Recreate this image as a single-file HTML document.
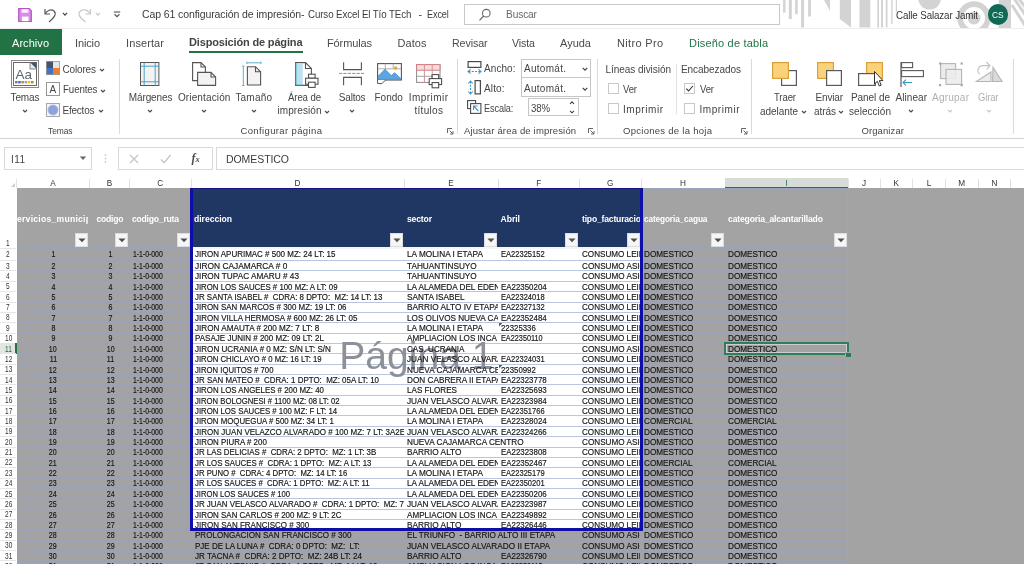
<!DOCTYPE html>
<html lang="es"><head><meta charset="utf-8"><title>Excel</title><style>
html,body{margin:0;padding:0;background:#fff;}
body{width:1024px;height:564px;overflow:hidden;position:relative;font-family:"Liberation Sans",sans-serif;}
#root{position:absolute;left:0;top:0;width:1024px;height:564px;overflow:hidden;will-change:transform;}
#root div,#root span.t,#root svg{position:absolute;}
.t{white-space:pre;}
.gl{height:3.4px;margin-top:-0.2px;background:linear-gradient(to bottom,rgba(152,160,196,0),rgba(152,160,196,.7) 45%,rgba(152,160,196,.7) 55%,rgba(152,160,196,0));}
.c{overflow:hidden;white-space:pre;font-size:8.6px;line-height:10px;color:#161616;}
.c span{display:inline-block;-webkit-text-stroke:0.17px #161616;}
svg{overflow:visible;}
</style></head><body><div id="root">
<div style="left:0px;top:0px;width:1024px;height:29px;background:#fff;"></div>
<svg style="left:0;top:0;overflow:hidden" width="1024" height="28" viewBox="0 0 1024 28">
<g fill="#d3d3d3">
<rect x="783.1" y="0" width="2.4" height="12.7"/><rect x="788.8" y="0" width="3" height="19"/><rect x="795.1" y="0" width="2.6" height="14.2"/>
<rect x="801.1" y="0" width="2.9" height="27.5"/><rect x="808.1" y="0" width="2.8" height="16.5"/>
<polygon points="824,0 830,0 830,11"/>
<polygon points="839.8,0 851,0 851,27.5 839.8,19"/>
<rect x="859.5" y="0" width="10.8" height="27.5"/>
<rect x="877.3" y="0" width="1.7" height="27.5"/><rect x="881" y="0" width="2" height="27.5"/><rect x="885.8" y="0" width="1.7" height="27.3"/><rect x="891.2" y="0" width="1.4" height="24"/><rect x="895.8" y="0" width="1.2" height="12"/>
<circle cx="929.6" cy="-2" r="11.5"/>
<rect x="998.7" y="0" width="12.3" height="28"/>
<circle cx="974" cy="18" r="6.5"/>
</g>
<circle cx="974" cy="18" r="13.85" fill="none" stroke="#d3d3d3" stroke-width="5.7"/>
<g stroke="#d3d3d3" stroke-width="3" fill="none"><path d="M1012 5 L1026 27 M1014.5 -1 L1026 16 M1019 -1 L1026 8"/></g>
</svg>
<svg style="left:18px;top:8.2px" width="14" height="14.2" viewBox="0 0 14 14.2"><path d="M0.7 0.7 H11.3 L13.3 2.7 V13.5 H0.7 Z" fill="#d98de6" stroke="#b653c8" stroke-width="1.2"/>
<rect x="3.6" y="1.2" width="6.8" height="3.6" fill="#fbf1fc"/>
<rect x="3.9" y="8.6" width="6.6" height="4.6" fill="#fff"/></svg>
<svg style="left:42px;top:6px" width="18" height="18" viewBox="0 0 18 18"><path d="M3 3 V8 H8" fill="none" stroke="#555" stroke-width="1.2"/><path d="M3.2 7.8 C5 4.5 9 2.5 12 5 C15 8 12 12 7 16" fill="none" stroke="#555" stroke-width="1.2"/></svg>
<svg style="left:60.5px;top:11px" width="8" height="6" viewBox="0 0 8 6"><path d="M1.9 1.95 L4 4.05 L6.1 1.95" fill="none" stroke="#444" stroke-width="1.2"/></svg>
<svg style="left:75px;top:6px" width="18" height="18" viewBox="0 0 18 18"><path d="M15.5 3 V8 H10.5" fill="none" stroke="#c6c6c6" stroke-width="1.2"/><path d="M15.3 7.8 C13.5 4.5 9 2.3 5.5 5 C2 8 5 12 10.5 16" fill="none" stroke="#c6c6c6" stroke-width="1.2"/></svg>
<svg style="left:94px;top:11px" width="8" height="6" viewBox="0 0 8 6"><path d="M1.9 1.95 L4 4.05 L6.1 1.95" fill="none" stroke="#cacaca" stroke-width="1.2"/></svg>
<svg style="left:112px;top:9px" width="10" height="10" viewBox="0 0 10 10"><path d="M1.8 3 H8.2" stroke="#555" stroke-width="1.1"/><path d="M2.6 5.3 L5 7.6 L7.4 5.3" fill="none" stroke="#555" stroke-width="1.2"/></svg>
<span class="t" style="left:142.00px;top:7.02px;font-size:10.5px;line-height:14px;color:#3b3b3b;letter-spacing:-0.102px;">Cap 61 configuración de impresión-</span>
<span class="t" style="left:308.40px;top:7.02px;font-size:10.5px;line-height:14px;color:#3b3b3b;letter-spacing:-0.120px;transform:scaleX(0.928);transform-origin:0 50%;">Curso Excel El Tío TEch</span>
<span class="t" style="left:418.60px;top:7.02px;font-size:10.5px;line-height:14px;color:#3b3b3b;">-</span>
<span class="t" style="left:426.70px;top:7.02px;font-size:10.5px;line-height:14px;color:#3b3b3b;letter-spacing:-0.120px;transform:scaleX(0.865);transform-origin:0 50%;">Excel</span>
<div style="left:463.5px;top:4px;width:316.5px;height:21px;background:#fff;border:1px solid #c8c8c8;box-sizing:border-box;"></div>
<svg style="left:478px;top:8px" width="14" height="14" viewBox="0 0 14 14"><circle cx="8.3" cy="5.2" r="3.8" fill="none" stroke="#666" stroke-width="1.1"/><path d="M5.6 8 L1.5 12.3" stroke="#666" stroke-width="1.2"/></svg>
<span class="t" style="left:506.00px;top:7.32px;font-size:10.5px;line-height:14px;color:#666;letter-spacing:-0.120px;transform:scaleX(0.966);transform-origin:0 50%;">Buscar</span>
<span class="t" style="left:896.00px;top:7.62px;font-size:10.5px;line-height:14px;color:#333;letter-spacing:-0.120px;transform:scaleX(0.929);transform-origin:0 50%;">Calle Salazar Jamit</span>
<div style="left:987.7px;top:4.3px;width:20.4px;height:20.4px;border-radius:11px;background:#0f6955"></div>
<span class="t" style="left:992.35px;top:8.71px;font-size:9.2px;line-height:12px;color:#fff;letter-spacing:-0.120px;transform:scaleX(0.908);transform-origin:0 50%;">CS</span>
<div style="left:0px;top:28px;width:1024px;height:28px;background:#fff;"></div>
<div style="left:0px;top:28px;width:1024px;height:1px;background:#efefef;"></div>
<div style="left:0px;top:29px;width:62px;height:26px;background:#217346;"></div>
<span class="t" style="left:12.00px;top:35.63px;font-size:11px;line-height:14px;color:#fff;letter-spacing:0.053px;">Archivo</span>
<span class="t" style="left:75.00px;top:35.63px;font-size:11px;line-height:14px;color:#4a4a4a;letter-spacing:-0.136px;">Inicio</span>
<span class="t" style="left:126.00px;top:35.63px;font-size:11px;line-height:14px;color:#4a4a4a;letter-spacing:0.101px;">Insertar</span>
<span class="t" style="left:327.00px;top:35.63px;font-size:11px;line-height:14px;color:#4a4a4a;letter-spacing:-0.121px;">Fórmulas</span>
<span class="t" style="left:397.50px;top:35.63px;font-size:11px;line-height:14px;color:#4a4a4a;letter-spacing:0.066px;">Datos</span>
<span class="t" style="left:451.50px;top:35.63px;font-size:11px;line-height:14px;color:#4a4a4a;letter-spacing:-0.120px;transform:scaleX(0.971);transform-origin:0 50%;">Revisar</span>
<span class="t" style="left:511.50px;top:35.63px;font-size:11px;line-height:14px;color:#4a4a4a;letter-spacing:-0.120px;transform:scaleX(0.967);transform-origin:0 50%;">Vista</span>
<span class="t" style="left:560.00px;top:35.63px;font-size:11px;line-height:14px;color:#4a4a4a;">Ayuda</span>
<span class="t" style="left:617.00px;top:35.63px;font-size:11px;line-height:14px;color:#4a4a4a;letter-spacing:0.325px;">Nitro Pro</span>
<span class="t" style="left:189.00px;top:35.43px;font-size:11px;line-height:14px;color:#444;font-weight:bold;letter-spacing:-0.162px;">Disposición de página</span>
<div style="left:189px;top:51.1px;width:114px;height:2.3px;background:#217346;"></div>
<span class="t" style="left:689.00px;top:35.63px;font-size:11px;line-height:14px;color:#217346;letter-spacing:0.183px;">Diseño de tabla</span>
<div style="left:0px;top:56px;width:1024px;height:83px;background:#fff;"></div>
<div style="left:0px;top:138.4px;width:1024px;height:1px;background:#d2d2d2;"></div>
<svg style="left:11px;top:60px" width="28" height="28" viewBox="0 0 28 28"><rect x="0.5" y="0.5" width="27" height="27" fill="#fff" stroke="#8a8a8a"/><rect x="2.5" y="2.5" width="23" height="23" fill="#fff" stroke="#6a6a6a"/>
<path d="M19 2.5 L25.5 9 V2.5 Z" fill="#44546a"/><path d="M19 2.5 V9 H25.5" fill="#e8e8e8" stroke="#6a6a6a" stroke-width="0.8"/>
<text x="4.5" y="18.5" font-family="Liberation Sans, sans-serif" font-size="13.5" fill="#5d6470">Aa</text>
<g><rect x="4" y="21" width="2.6" height="2.4" fill="#7f7f7f"/><rect x="7.2" y="21" width="2.6" height="2.4" fill="#4472c4"/><rect x="10.4" y="21" width="2.6" height="2.4" fill="#ed7d31"/><rect x="13.6" y="21" width="2.6" height="2.4" fill="#a5a5a5"/><rect x="16.8" y="21" width="2.6" height="2.4" fill="#ffc000"/><rect x="20" y="21" width="2.6" height="2.4" fill="#70ad47"/></g></svg>
<span class="t" style="left:10.50px;top:90.61px;font-size:10px;line-height:13px;color:#454545;letter-spacing:-0.113px;">Temas</span>
<svg style="left:20.5px;top:107.5px" width="8" height="6" viewBox="0 0 8 6"><path d="M2.0 2.0 L4 4.0 L6.0 2.0" fill="none" stroke="#4a4a4a" stroke-width="1.15"/></svg>
<svg style="left:45.6px;top:61.2px" width="14" height="14" viewBox="0 0 14 14"><rect x="0" y="0" width="7" height="7" fill="#44546a"/><rect x="7" y="0" width="7" height="7" fill="#e7e6e6"/><rect x="0" y="7" width="7" height="7" fill="#4472c4"/><rect x="7" y="7" width="7" height="7" fill="#ed7d31"/><rect x="0.5" y="0.5" width="13" height="13" fill="none" stroke="#9a9a9a" stroke-width="0.8"/></svg>
<span class="t" style="left:62.50px;top:62.52px;font-size:10px;line-height:13px;color:#454545;letter-spacing:-0.160px;">Colores</span>
<svg style="left:98px;top:66.5px" width="8" height="6" viewBox="0 0 8 6"><path d="M2.0 2.0 L4 4.0 L6.0 2.0" fill="none" stroke="#4a4a4a" stroke-width="1.15"/></svg>
<svg style="left:45.7px;top:82.2px" width="14" height="14" viewBox="0 0 14 14"><rect x="0.5" y="0.5" width="13" height="13" fill="#fff" stroke="#969696"/><text x="3.4" y="11" font-family="Liberation Sans, sans-serif" font-size="10" fill="#444">A</text></svg>
<span class="t" style="left:62.50px;top:83.11px;font-size:10px;line-height:13px;color:#454545;letter-spacing:-0.120px;transform:scaleX(0.974);transform-origin:0 50%;">Fuentes</span>
<svg style="left:99px;top:87.5px" width="8" height="6" viewBox="0 0 8 6"><path d="M2.0 2.0 L4 4.0 L6.0 2.0" fill="none" stroke="#4a4a4a" stroke-width="1.15"/></svg>
<svg style="left:45.7px;top:102.5px" width="14" height="14" viewBox="0 0 14 14"><rect x="0.5" y="0.5" width="13" height="13" fill="#f4f4f4" stroke="#a8a8a8"/><circle cx="7" cy="7" r="5" fill="#8da1dc" stroke="#a9b8e6" stroke-width="0.9"/></svg>
<span class="t" style="left:62.50px;top:103.61px;font-size:10px;line-height:13px;color:#454545;letter-spacing:-0.225px;">Efectos</span>
<svg style="left:96.5px;top:108px" width="8" height="6" viewBox="0 0 8 6"><path d="M2.0 2.0 L4 4.0 L6.0 2.0" fill="none" stroke="#4a4a4a" stroke-width="1.15"/></svg>
<span class="t" style="left:47.75px;top:125.11px;font-size:9.5px;line-height:12px;color:#454545;letter-spacing:-0.120px;transform:scaleX(0.891);transform-origin:0 50%;">Temas</span>
<div style="left:119px;top:59px;width:1px;height:75px;background:#dadada;"></div>
<svg style="left:140.3px;top:62px" width="19.4" height="24" viewBox="0 0 19.4 24"><rect x="0.5" y="0.5" width="18.4" height="23" fill="#f3f3f3" stroke="#555" stroke-width="1"/>
<path d="M4.2 0.5 V23.5 M15.2 0.5 V23.5 M0.5 4.2 H18.9 M0.5 19.8 H18.9" stroke="#3c9cc4" stroke-width="0.9"/></svg>
<span class="t" style="left:128.72px;top:90.61px;font-size:10px;line-height:13px;color:#454545;letter-spacing:-0.103px;">Márgenes</span>
<svg style="left:146px;top:107.5px" width="8" height="6" viewBox="0 0 8 6"><path d="M2.0 2.0 L4 4.0 L6.0 2.0" fill="none" stroke="#4a4a4a" stroke-width="1.15"/></svg>
<svg style="left:192px;top:62px" width="25" height="24" viewBox="0 0 25 24"><path d="M0.6 0.6 H9 L13.4 5 V18.6 H0.6 Z" fill="#fff" stroke="#555" stroke-width="1.1"/><path d="M9 0.6 V5 H13.4" fill="none" stroke="#555" stroke-width="1.1"/>
<path d="M5.6 10.4 H19 L23.6 15 V23.4 H5.6 Z" fill="#f3f3f3" stroke="#555" stroke-width="1.1"/><path d="M19 10.4 V15 H23.6" fill="none" stroke="#555" stroke-width="1.1"/></svg>
<span class="t" style="left:177.95px;top:90.61px;font-size:10px;line-height:13px;color:#454545;letter-spacing:0.136px;">Orientación</span>
<svg style="left:200px;top:107.5px" width="8" height="6" viewBox="0 0 8 6"><path d="M2.0 2.0 L4 4.0 L6.0 2.0" fill="none" stroke="#4a4a4a" stroke-width="1.15"/></svg>
<svg style="left:241px;top:61px" width="22" height="26" viewBox="0 0 22 26"><path d="M5.9 1.8 H20 M5.9 0.6 V3 M20 0.6 V3" stroke="#4ba6cc" stroke-width="0.9"/><path d="M2.3 5.2 V24.5 M1.1 5.2 H3.5 M1.1 24.5 H3.5" stroke="#4ba6cc" stroke-width="0.9"/>
<path d="M6.4 5.7 H14.5 L19.6 10.8 V24 H6.4 Z" fill="#f3f3f3" stroke="#555" stroke-width="1.1"/><path d="M14.5 5.7 V10.8 H19.6" fill="none" stroke="#555" stroke-width="1.1"/></svg>
<span class="t" style="left:235.45px;top:90.61px;font-size:10px;line-height:13px;color:#454545;letter-spacing:0.185px;">Tamaño</span>
<svg style="left:249.7px;top:107.5px" width="8" height="6" viewBox="0 0 8 6"><path d="M2.0 2.0 L4 4.0 L6.0 2.0" fill="none" stroke="#4a4a4a" stroke-width="1.15"/></svg>
<svg style="left:294.5px;top:62px" width="24" height="26" viewBox="0 0 24 26"><path d="M0.6 0.6 H10.5 L16.4 6.5 V23.4 H0.6 Z" fill="#fff" stroke="#555" stroke-width="1.1"/><path d="M10.5 0.6 V6.5 H16.4" fill="none" stroke="#555" stroke-width="1.1"/>
<rect x="1.1" y="1.1" width="6.6" height="21.8" fill="#bfdfee"/><path d="M1 1 V23 H8" fill="none" stroke="#4ba6cc" stroke-width="0.9"/><rect x="13.5" y="12.2" width="6.6" height="4" fill="#fff" stroke="#4a4a4a" stroke-width="1.05"/><rect x="10.6" y="16.2" width="12.4" height="6" fill="#fff" stroke="#4a4a4a" stroke-width="1.05"/><rect x="13.5" y="20.2" width="6.6" height="5.2" fill="#fff" stroke="#4a4a4a" stroke-width="1.05"/></svg>
<span class="t" style="left:288.00px;top:90.61px;font-size:10px;line-height:13px;color:#454545;letter-spacing:-0.120px;transform:scaleX(0.962);transform-origin:0 50%;">Área de</span>
<span class="t" style="left:277.50px;top:104.11px;font-size:10px;line-height:13px;color:#454545;letter-spacing:0.081px;">impresión</span>
<svg style="left:323px;top:108.5px" width="8" height="6" viewBox="0 0 8 6"><path d="M2.0 2.0 L4 4.0 L6.0 2.0" fill="none" stroke="#4a4a4a" stroke-width="1.15"/></svg>
<svg style="left:339px;top:62px" width="26" height="24" viewBox="0 0 26 24"><path d="M4.6 0.3 V7.6 H22.4 V0.3" fill="none" stroke="#555" stroke-width="1.1"/><path d="M4.6 23.2 V15.4 H22.4 V23.2" fill="none" stroke="#555" stroke-width="1.1"/>
<path d="M0 11.4 H26" stroke="#4ba6cc" stroke-width="1" stroke-dasharray="3.2 1.2"/></svg>
<span class="t" style="left:338.80px;top:90.61px;font-size:10px;line-height:13px;color:#454545;letter-spacing:-0.199px;">Saltos</span>
<svg style="left:347.8px;top:107.5px" width="8" height="6" viewBox="0 0 8 6"><path d="M2.0 2.0 L4 4.0 L6.0 2.0" fill="none" stroke="#4a4a4a" stroke-width="1.15"/></svg>
<svg style="left:376.5px;top:63px" width="25" height="22" viewBox="0 0 25 22"><rect x="0.6" y="0.6" width="23.8" height="16.4" fill="#fff" stroke="#555" stroke-width="1.1"/>
<path d="M8.3 0.6 V7 M16.2 0.6 V5.5 M0.6 5.8 H24.4" stroke="#9a9a9a" stroke-width="0.8"/>
<circle cx="18.7" cy="5" r="1.7" fill="#eea23a"/>
<path d="M1.2 16.4 V13 L8 6.2 L14.4 12.6 L17.6 9.6 L23.8 15.6 V16.4 Z" fill="#5ba6e2" stroke="#3e86c6" stroke-width="0.6"/>
<path d="M0.6 17 V20.6 H5 L8.6 17" fill="#fff" stroke="#555" stroke-width="1"/></svg>
<span class="t" style="left:374.45px;top:90.61px;font-size:10px;line-height:13px;color:#454545;letter-spacing:0.036px;">Fondo</span>
<svg style="left:416px;top:63.6px" width="27" height="25" viewBox="0 0 27 25"><rect x="0.6" y="0.6" width="23.4" height="17.8" fill="#fff" stroke="#8a8a8a" stroke-width="1"/>
<rect x="0.6" y="0.6" width="23.4" height="5.6" fill="#f6dede" stroke="#d47e7e" stroke-width="1"/>
<path d="M8.4 0.6 V18.4 M16.2 0.6 V18.4" stroke="#d89090" stroke-width="1"/><path d="M0.6 12.3 H24" stroke="#9a9a9a" stroke-width="0.9"/><rect x="16.099999999999998" y="10.6" width="6.6" height="4" fill="#fff" stroke="#4a4a4a" stroke-width="1.05"/><rect x="13.2" y="14.6" width="12.4" height="6" fill="#fff" stroke="#4a4a4a" stroke-width="1.05"/><rect x="16.099999999999998" y="18.6" width="6.6" height="5.2" fill="#fff" stroke="#4a4a4a" stroke-width="1.05"/></svg>
<span class="t" style="left:408.80px;top:90.61px;font-size:10px;line-height:13px;color:#454545;letter-spacing:0.442px;">Imprimir</span>
<span class="t" style="left:414.45px;top:104.11px;font-size:10px;line-height:13px;color:#454545;letter-spacing:0.303px;">títulos</span>
<span class="t" style="left:240.45px;top:125.11px;font-size:9.5px;line-height:12px;color:#454545;letter-spacing:0.373px;">Configurar página</span>
<svg style="left:447px;top:128px" width="7" height="7" viewBox="0 0 7 7"><path d="M0.5 5 V0.5 H5" fill="none" stroke="#666" stroke-width="1"/><path d="M2.5 2.5 L6 6 M6 3 V6 H3" fill="none" stroke="#666" stroke-width="1"/></svg>
<div style="left:457px;top:59px;width:1px;height:75px;background:#dadada;"></div>
<svg style="left:467px;top:60.5px" width="15" height="14" viewBox="0 0 15 14"><rect x="1.1" y="0.6" width="12.8" height="5.8" fill="#fff" stroke="#4a4a4a" stroke-width="1.2"/><path d="M1.5 10.5 H13.5" stroke="#3a96c8" stroke-width="1.1" stroke-dasharray="2 1.3"/><path d="M3.5 8.3 L1 10.5 L3.5 12.7 M11.5 8.3 L14 10.5 L11.5 12.7" fill="none" stroke="#3a96c8" stroke-width="1.1"/></svg>
<span class="t" style="left:484.00px;top:62.12px;font-size:10px;line-height:13px;color:#454545;letter-spacing:0.073px;">Ancho:</span>
<div style="left:521px;top:59px;width:70px;height:19px;background:#fff;border:1px solid #c6c6c6;box-sizing:border-box;"></div>
<span class="t" style="left:524.00px;top:62.12px;font-size:10px;line-height:13px;color:#454545;letter-spacing:0.283px;">Automát.</span>
<svg style="left:581px;top:66px" width="8" height="6" viewBox="0 0 8 6"><path d="M1.7000000000000002 1.85 L4 4.15 L6.3 1.85" fill="none" stroke="#444" stroke-width="1.2"/></svg>
<svg style="left:467px;top:80px" width="15" height="15" viewBox="0 0 15 15"><rect x="8.1" y="0.6" width="5.3" height="13.3" fill="#fff" stroke="#4a4a4a" stroke-width="1.2"/><path d="M3.5 1.5 V13.5" stroke="#3a96c8" stroke-width="1.1" stroke-dasharray="2 1.3"/><path d="M1.3 3.5 L3.5 1 L5.7 3.5 M1.3 11.5 L3.5 14 L5.7 11.5" fill="none" stroke="#3a96c8" stroke-width="1.1"/></svg>
<span class="t" style="left:484.00px;top:82.11px;font-size:10px;line-height:13px;color:#454545;letter-spacing:0.122px;">Alto:</span>
<div style="left:521px;top:77px;width:70px;height:20px;background:#fff;border:1px solid #c6c6c6;box-sizing:border-box;"></div>
<span class="t" style="left:524.00px;top:81.61px;font-size:10px;line-height:13px;color:#454545;letter-spacing:0.283px;">Automát.</span>
<svg style="left:581px;top:85.5px" width="8" height="6" viewBox="0 0 8 6"><path d="M1.7000000000000002 1.85 L4 4.15 L6.3 1.85" fill="none" stroke="#444" stroke-width="1.2"/></svg>
<svg style="left:467px;top:100px" width="15" height="14" viewBox="0 0 15 14"><rect x="0.6" y="0.6" width="8" height="8" fill="#fff" stroke="#4a4a4a" stroke-width="1.1"/><rect x="3.6" y="3.6" width="10.3" height="9.8" fill="#fff" stroke="#4a4a4a" stroke-width="1.1"/><path d="M11.5 11 L6.5 6 M6.5 10 V6 H10.5" fill="none" stroke="#3a96c8" stroke-width="1.1"/></svg>
<span class="t" style="left:484.00px;top:102.11px;font-size:10px;line-height:13px;color:#454545;letter-spacing:-0.120px;transform:scaleX(0.914);transform-origin:0 50%;">Escala:</span>
<div style="left:528px;top:97.5px;width:51px;height:18.5px;background:#fff;border:1px solid #c6c6c6;box-sizing:border-box;"></div>
<span class="t" style="left:531.00px;top:101.61px;font-size:10px;line-height:13px;color:#454545;letter-spacing:-0.120px;transform:scaleX(0.961);transform-origin:0 50%;">38%</span>
<svg style="left:567.7px;top:100.2px" width="8" height="6" viewBox="0 0 8 6"><path d="M2 3.8 L4 1.8 L6 3.8" fill="none" stroke="#444" stroke-width="1.1"/></svg>
<svg style="left:567.7px;top:108.5px" width="8" height="6" viewBox="0 0 8 6"><path d="M2 1.8 L4 3.8 L6 1.8" fill="none" stroke="#444" stroke-width="1.1"/></svg>
<svg style="left:567.7px;top:100px" width="8" height="6" viewBox="0 0 8 6"></svg>
<span class="t" style="left:463.88px;top:125.11px;font-size:9.5px;line-height:12px;color:#454545;letter-spacing:0.167px;">Ajustar área de impresión</span>
<svg style="left:588px;top:128px" width="7" height="7" viewBox="0 0 7 7"><path d="M0.5 5 V0.5 H5" fill="none" stroke="#666" stroke-width="1"/><path d="M2.5 2.5 L6 6 M6 3 V6 H3" fill="none" stroke="#666" stroke-width="1"/></svg>
<div style="left:597px;top:59px;width:1px;height:75px;background:#dadada;"></div>
<span class="t" style="left:605.50px;top:63.12px;font-size:10px;line-height:13px;color:#454545;letter-spacing:-0.047px;">Líneas división</span>
<div style="left:608px;top:82.8px;width:11px;height:11px;background:#fff;border:1px solid #c8c8c8;box-sizing:border-box;"></div>
<span class="t" style="left:623.00px;top:82.61px;font-size:10px;line-height:13px;color:#454545;letter-spacing:-0.120px;transform:scaleX(0.948);transform-origin:0 50%;">Ver</span>
<div style="left:608px;top:102.8px;width:11px;height:11px;background:#fff;border:1px solid #c8c8c8;box-sizing:border-box;"></div>
<span class="t" style="left:623.00px;top:103.11px;font-size:10px;line-height:13px;color:#454545;letter-spacing:0.556px;">Imprimir</span>
<div style="left:676px;top:64px;width:1px;height:50px;background:#e2e2e2;"></div>
<span class="t" style="left:681.00px;top:63.12px;font-size:10px;line-height:13px;color:#454545;letter-spacing:-0.060px;">Encabezados</span>
<div style="left:683.5px;top:82.8px;width:11px;height:11px;background:#fff;border:1px solid #c8c8c8;box-sizing:border-box;"></div>
<svg style="left:683.5px;top:82.8px" width="11" height="11" viewBox="0 0 11 11"><path d="M2.3 5.6 L4.6 8 L8.8 3" fill="none" stroke="#333" stroke-width="1.1"/></svg>
<span class="t" style="left:699.50px;top:82.61px;font-size:10px;line-height:13px;color:#454545;letter-spacing:-0.120px;transform:scaleX(0.948);transform-origin:0 50%;">Ver</span>
<div style="left:683.5px;top:102.8px;width:11px;height:11px;background:#fff;border:1px solid #c8c8c8;box-sizing:border-box;"></div>
<span class="t" style="left:699.50px;top:103.11px;font-size:10px;line-height:13px;color:#454545;letter-spacing:0.556px;">Imprimir</span>
<span class="t" style="left:623.00px;top:125.11px;font-size:9.5px;line-height:12px;color:#454545;letter-spacing:0.279px;">Opciones de la hoja</span>
<svg style="left:741px;top:128px" width="7" height="7" viewBox="0 0 7 7"><path d="M0.5 5 V0.5 H5" fill="none" stroke="#666" stroke-width="1"/><path d="M2.5 2.5 L6 6 M6 3 V6 H3" fill="none" stroke="#666" stroke-width="1"/></svg>
<div style="left:751px;top:59px;width:1px;height:75px;background:#dadada;"></div>
<svg style="left:772px;top:62px" width="25" height="24" viewBox="0 0 25 24"><rect x="9.6" y="8.6" width="14.8" height="14.8" fill="#fff" stroke="#5a5a5a" stroke-width="1.2"/><rect x="0.6" y="0.6" width="15.8" height="15.8" fill="#fbd27a" stroke="#d9a13c" stroke-width="1.2"/></svg>
<span class="t" style="left:773.50px;top:91.11px;font-size:10px;line-height:13px;color:#454545;letter-spacing:-0.120px;transform:scaleX(0.955);transform-origin:0 50%;">Traer</span>
<span class="t" style="left:760.00px;top:104.61px;font-size:10px;line-height:13px;color:#454545;letter-spacing:-0.053px;">adelante</span>
<svg style="left:800px;top:109px" width="8" height="6" viewBox="0 0 8 6"><path d="M2.0 2.0 L4 4.0 L6.0 2.0" fill="none" stroke="#4a4a4a" stroke-width="1.15"/></svg>
<svg style="left:817px;top:62px" width="25" height="24" viewBox="0 0 25 24"><rect x="0.6" y="0.6" width="15.8" height="15.8" fill="#fbd27a" stroke="#d9a13c" stroke-width="1.2"/><rect x="9.6" y="8.6" width="14.8" height="14.8" fill="#fff" stroke="#5a5a5a" stroke-width="1.2"/></svg>
<span class="t" style="left:815.55px;top:91.11px;font-size:10px;line-height:13px;color:#454545;letter-spacing:-0.169px;">Enviar</span>
<span class="t" style="left:814.00px;top:104.61px;font-size:10px;line-height:13px;color:#454545;letter-spacing:-0.058px;">atrás</span>
<svg style="left:837px;top:109px" width="8" height="6" viewBox="0 0 8 6"><path d="M2.0 2.0 L4 4.0 L6.0 2.0" fill="none" stroke="#4a4a4a" stroke-width="1.15"/></svg>
<svg style="left:858px;top:62px" width="27" height="25" viewBox="0 0 27 25"><rect x="8.6" y="0.6" width="15.8" height="15.8" fill="#fbd27a" stroke="#d9a13c" stroke-width="1.2"/><rect x="0.6" y="11.6" width="16.8" height="11.8" fill="#fff" stroke="#5a5a5a" stroke-width="1.2"/>
<path d="M16.5 9.5 V22 L19.3 19.3 L21.3 24 L23.2 23.2 L21.3 18.6 H25 Z" fill="#fff" stroke="#333" stroke-width="1"/></svg>
<span class="t" style="left:851.00px;top:91.11px;font-size:10px;line-height:13px;color:#454545;letter-spacing:-0.068px;">Panel de</span>
<span class="t" style="left:849.00px;top:104.61px;font-size:10px;line-height:13px;color:#454545;letter-spacing:0.039px;">selección</span>
<svg style="left:900px;top:62px" width="25" height="25" viewBox="0 0 25 25"><path d="M1 0 V25" stroke="#5a5a5a" stroke-width="1.2"/><rect x="1.6" y="0.6" width="11" height="5" fill="#fff" stroke="#5a5a5a" stroke-width="1.1"/><rect x="1.6" y="8.6" width="21.8" height="6" fill="#fff" stroke="#5a5a5a" stroke-width="1.1"/>
<path d="M3 20.5 H12 M6 17.7 L3 20.5 L6 23.3" fill="none" stroke="#3a96c8" stroke-width="1.1"/></svg>
<span class="t" style="left:895.55px;top:91.11px;font-size:10px;line-height:13px;color:#454545;letter-spacing:0.062px;">Alinear</span>
<svg style="left:907.4px;top:107.5px" width="8" height="6" viewBox="0 0 8 6"><path d="M2.0 2.0 L4 4.0 L6.0 2.0" fill="none" stroke="#4a4a4a" stroke-width="1.15"/></svg>
<svg style="left:939px;top:62px" width="25" height="25" viewBox="0 0 25 25"><rect x="1.6" y="1.6" width="15" height="15" fill="#ececec" stroke="#b4b4b4" stroke-width="1.1"/><rect x="7" y="7.4" width="15.6" height="15" fill="#ececec" fill-opacity="0.85" stroke="#b4b4b4" stroke-width="1.1"/>
<g fill="#a8a8a8"><rect x="0" y="0.4" width="2.2" height="2.2"/><rect x="21.6" y="0.4" width="2.2" height="2.2"/><rect x="0" y="22" width="2.2" height="2.2"/><rect x="21.6" y="22" width="2.2" height="2.2"/></g></svg>
<span class="t" style="left:932.00px;top:91.11px;font-size:10px;line-height:13px;color:#b0b0b0;letter-spacing:0.237px;">Agrupar</span>
<svg style="left:946px;top:107.5px" width="8" height="6" viewBox="0 0 8 6"><path d="M2.0 2.0 L4 4.0 L6.0 2.0" fill="none" stroke="#c8c8c8" stroke-width="1.15"/></svg>
<svg style="left:976px;top:61px" width="27" height="26" viewBox="0 0 27 26"><path d="M0.4 20.5 H15 V11 Z" fill="#ececec" stroke="#b4b4b4" stroke-width="1.1"/><path d="M16.6 20.5 H26 L17 6.3 Z" fill="#dadada" stroke="#b4b4b4" stroke-width="1.1"/>
<path d="M3.7 13.3 C0.3 10 2 4.6 7 4.6 H13.6 M10.3 1 L14 4.6 L10.6 8.4" fill="none" stroke="#c2c2c2" stroke-width="1.1"/></svg>
<span class="t" style="left:978.45px;top:91.11px;font-size:10px;line-height:13px;color:#b0b0b0;letter-spacing:-0.120px;transform:scaleX(0.943);transform-origin:0 50%;">Girar</span>
<svg style="left:984.6px;top:107.5px" width="8" height="6" viewBox="0 0 8 6"><path d="M2.0 2.0 L4 4.0 L6.0 2.0" fill="none" stroke="#c8c8c8" stroke-width="1.15"/></svg>
<span class="t" style="left:861.40px;top:125.11px;font-size:9.5px;line-height:12px;color:#454545;letter-spacing:0.111px;">Organizar</span>
<div style="left:1013px;top:59px;width:1px;height:75px;background:#dadada;"></div>
<div style="left:0px;top:140px;width:1024px;height:38px;background:#fff;"></div>
<div style="left:4px;top:147px;width:88px;height:22.5px;background:#fff;border:1px solid #d9d9d9;box-sizing:border-box;"></div>
<span class="t" style="left:11.00px;top:152.62px;font-size:10px;line-height:13px;color:#444;letter-spacing:0.420px;">I11</span>
<svg style="left:79px;top:155.6px" width="8" height="5" viewBox="0 0 8 5"><path d="M0.8 0.6 H7.2 L4 4 Z" fill="#666"/></svg>
<svg style="left:104px;top:153px" width="3" height="12" viewBox="0 0 3 12"><circle cx="1.5" cy="2" r="0.75" fill="#b4b4b4"/><circle cx="1.5" cy="5.5" r="0.75" fill="#b4b4b4"/><circle cx="1.5" cy="9" r="0.75" fill="#b4b4b4"/></svg>
<div style="left:118px;top:147px;width:95px;height:22.5px;background:#fff;border:1px solid #d9d9d9;box-sizing:border-box;"></div>
<svg style="left:129px;top:154px" width="10" height="10" viewBox="0 0 10 10"><path d="M1 1 L9 9 M9 1 L1 9" stroke="#c4c4c4" stroke-width="1.2"/></svg>
<svg style="left:160px;top:154px" width="12" height="10" viewBox="0 0 12 10"><path d="M1 5.5 L4.2 8.8 L10.5 1" fill="none" stroke="#c4c4c4" stroke-width="1.3"/></svg>
<span class="t" style="left:191.5px;top:151px;font-size:12px;line-height:14px;color:#4e4e4e;font-weight:bold;font-family:'Liberation Serif',serif;font-style:italic;">f<span style="font-size:8.5px">x</span></span>
<div style="left:215.5px;top:147px;width:820px;height:22.5px;background:#fff;border:1px solid #d9d9d9;box-sizing:border-box;"></div>
<span class="t" style="left:226.00px;top:152.12px;font-size:10.5px;line-height:14px;color:#3a3a3a;letter-spacing:-0.073px;">DOMESTICO</span>
<div style="left:0px;top:178px;width:1024px;height:10px;background:#fff;"></div>
<span class="t" style="left:50.27px;top:177.89px;font-size:8.2px;line-height:11px;color:#333;">A</span>
<div style="left:89.0px;top:179px;width:1px;height:9px;background:#e1e1e1;"></div>
<span class="t" style="left:106.77px;top:177.89px;font-size:8.2px;line-height:11px;color:#333;">B</span>
<div style="left:129.0px;top:179px;width:1px;height:9px;background:#e1e1e1;"></div>
<span class="t" style="left:157.29px;top:177.89px;font-size:8.2px;line-height:11px;color:#333;">C</span>
<div style="left:190.5px;top:179px;width:1px;height:9px;background:#e1e1e1;"></div>
<span class="t" style="left:294.54px;top:177.89px;font-size:8.2px;line-height:11px;color:#333;">D</span>
<div style="left:403.5px;top:179px;width:1px;height:9px;background:#e1e1e1;"></div>
<span class="t" style="left:448.27px;top:177.89px;font-size:8.2px;line-height:11px;color:#333;">E</span>
<div style="left:497.5px;top:179px;width:1px;height:9px;background:#e1e1e1;"></div>
<span class="t" style="left:536.25px;top:177.89px;font-size:8.2px;line-height:11px;color:#333;">F</span>
<div style="left:579.0px;top:179px;width:1px;height:9px;background:#e1e1e1;"></div>
<span class="t" style="left:607.06px;top:177.89px;font-size:8.2px;line-height:11px;color:#333;">G</span>
<div style="left:640.5px;top:179px;width:1px;height:9px;background:#e1e1e1;"></div>
<span class="t" style="left:680.04px;top:177.89px;font-size:8.2px;line-height:11px;color:#333;">H</span>
<div style="left:724.5px;top:179px;width:1px;height:9px;background:#e1e1e1;"></div>
<div style="left:725px;top:178px;width:123px;height:10px;background:#d8dcd9;"></div>
<div style="left:725px;top:186.5px;width:123px;height:1.5px;background:#217346;"></div>
<span class="t" style="left:785.36px;top:177.89px;font-size:8.2px;line-height:11px;color:#217346;">I</span>
<div style="left:847.5px;top:179px;width:1px;height:9px;background:#e1e1e1;"></div>
<span class="t" style="left:861.95px;top:177.89px;font-size:8.2px;line-height:11px;color:#333;">J</span>
<div style="left:879.5px;top:179px;width:1px;height:9px;background:#e1e1e1;"></div>
<span class="t" style="left:893.62px;top:177.89px;font-size:8.2px;line-height:11px;color:#333;">K</span>
<div style="left:912.2px;top:179px;width:1px;height:9px;background:#e1e1e1;"></div>
<span class="t" style="left:926.77px;top:177.89px;font-size:8.2px;line-height:11px;color:#333;">L</span>
<div style="left:944.9px;top:179px;width:1px;height:9px;background:#e1e1e1;"></div>
<span class="t" style="left:958.28px;top:177.89px;font-size:8.2px;line-height:11px;color:#333;">M</span>
<div style="left:977.5px;top:179px;width:1px;height:9px;background:#e1e1e1;"></div>
<span class="t" style="left:991.44px;top:177.89px;font-size:8.2px;line-height:11px;color:#333;">N</span>
<div style="left:1010.3px;top:179px;width:1px;height:9px;background:#e1e1e1;"></div>
<span class="t" style="left:1024.21px;top:177.89px;font-size:8.2px;line-height:11px;color:#333;">O</span>
<div style="left:1043.5px;top:179px;width:1px;height:9px;background:#e1e1e1;"></div>
<svg style="left:11px;top:182.5px" width="4" height="4" viewBox="0 0 4 4"><path d="M4 0 V4 H0 Z" fill="#cfcfcf"/></svg>
<div style="left:16px;top:179px;width:1px;height:9px;background:#e1e1e1;"></div>
<div style="left:16.5px;top:188px;width:1007.5px;height:376px;background:#a3a3a3;"></div>
<div style="left:0px;top:188px;width:16.5px;height:376px;background:#fff;"></div>
<div style="left:191px;top:248px;width:450px;height:281.88200000000006px;background:#fff;"></div>
<div style="left:191px;top:188px;width:450px;height:59.5px;background:#203764;"></div>
<div class="gl" style="left:16.5px;top:246.50px;width:174.5px"></div>
<div class="gl" style="left:641px;top:246.50px;width:207px"></div>
<div style="left:191px;top:248px;width:450px;height:1px;background:#bac5e0;"></div>
<div class="gl" style="left:16.5px;top:259.10px;width:174.5px"></div>
<div class="gl" style="left:641px;top:259.10px;width:207px"></div>
<div style="left:191px;top:260px;width:450px;height:1px;background:#bac5e0;"></div>
<div class="gl" style="left:16.5px;top:269.46px;width:174.5px"></div>
<div class="gl" style="left:641px;top:269.46px;width:207px"></div>
<div style="left:191px;top:270px;width:450px;height:1px;background:#bac5e0;"></div>
<div class="gl" style="left:16.5px;top:279.81px;width:174.5px"></div>
<div class="gl" style="left:641px;top:279.81px;width:207px"></div>
<div style="left:191px;top:281px;width:450px;height:1px;background:#bac5e0;"></div>
<div class="gl" style="left:16.5px;top:290.17px;width:174.5px"></div>
<div class="gl" style="left:641px;top:290.17px;width:207px"></div>
<div style="left:191px;top:291px;width:450px;height:1px;background:#bac5e0;"></div>
<div class="gl" style="left:16.5px;top:300.53px;width:174.5px"></div>
<div class="gl" style="left:641px;top:300.53px;width:207px"></div>
<div style="left:191px;top:302px;width:450px;height:1px;background:#bac5e0;"></div>
<div class="gl" style="left:16.5px;top:310.88px;width:174.5px"></div>
<div class="gl" style="left:641px;top:310.88px;width:207px"></div>
<div style="left:191px;top:312px;width:450px;height:1px;background:#bac5e0;"></div>
<div class="gl" style="left:16.5px;top:321.24px;width:174.5px"></div>
<div class="gl" style="left:641px;top:321.24px;width:207px"></div>
<div style="left:191px;top:322px;width:450px;height:1px;background:#bac5e0;"></div>
<div class="gl" style="left:16.5px;top:331.60px;width:174.5px"></div>
<div class="gl" style="left:641px;top:331.60px;width:207px"></div>
<div style="left:191px;top:333px;width:450px;height:1px;background:#bac5e0;"></div>
<div class="gl" style="left:16.5px;top:341.96px;width:174.5px"></div>
<div class="gl" style="left:641px;top:341.96px;width:207px"></div>
<div style="left:191px;top:343px;width:450px;height:1px;background:#bac5e0;"></div>
<div class="gl" style="left:16.5px;top:352.31px;width:174.5px"></div>
<div class="gl" style="left:641px;top:352.31px;width:207px"></div>
<div style="left:191px;top:353px;width:450px;height:1px;background:#bac5e0;"></div>
<div class="gl" style="left:16.5px;top:362.67px;width:174.5px"></div>
<div class="gl" style="left:641px;top:362.67px;width:207px"></div>
<div style="left:191px;top:364px;width:450px;height:1px;background:#bac5e0;"></div>
<div class="gl" style="left:16.5px;top:373.03px;width:174.5px"></div>
<div class="gl" style="left:641px;top:373.03px;width:207px"></div>
<div style="left:191px;top:374px;width:450px;height:1px;background:#bac5e0;"></div>
<div class="gl" style="left:16.5px;top:383.38px;width:174.5px"></div>
<div class="gl" style="left:641px;top:383.38px;width:207px"></div>
<div style="left:191px;top:384px;width:450px;height:1px;background:#bac5e0;"></div>
<div class="gl" style="left:16.5px;top:393.74px;width:174.5px"></div>
<div class="gl" style="left:641px;top:393.74px;width:207px"></div>
<div style="left:191px;top:395px;width:450px;height:1px;background:#bac5e0;"></div>
<div class="gl" style="left:16.5px;top:404.10px;width:174.5px"></div>
<div class="gl" style="left:641px;top:404.10px;width:207px"></div>
<div style="left:191px;top:405px;width:450px;height:1px;background:#bac5e0;"></div>
<div class="gl" style="left:16.5px;top:414.46px;width:174.5px"></div>
<div class="gl" style="left:641px;top:414.46px;width:207px"></div>
<div style="left:191px;top:415px;width:450px;height:1px;background:#bac5e0;"></div>
<div class="gl" style="left:16.5px;top:424.81px;width:174.5px"></div>
<div class="gl" style="left:641px;top:424.81px;width:207px"></div>
<div style="left:191px;top:426px;width:450px;height:1px;background:#bac5e0;"></div>
<div class="gl" style="left:16.5px;top:435.17px;width:174.5px"></div>
<div class="gl" style="left:641px;top:435.17px;width:207px"></div>
<div style="left:191px;top:436px;width:450px;height:1px;background:#bac5e0;"></div>
<div class="gl" style="left:16.5px;top:445.53px;width:174.5px"></div>
<div class="gl" style="left:641px;top:445.53px;width:207px"></div>
<div style="left:191px;top:447px;width:450px;height:1px;background:#bac5e0;"></div>
<div class="gl" style="left:16.5px;top:455.88px;width:174.5px"></div>
<div class="gl" style="left:641px;top:455.88px;width:207px"></div>
<div style="left:191px;top:457px;width:450px;height:1px;background:#bac5e0;"></div>
<div class="gl" style="left:16.5px;top:466.24px;width:174.5px"></div>
<div class="gl" style="left:641px;top:466.24px;width:207px"></div>
<div style="left:191px;top:467px;width:450px;height:1px;background:#bac5e0;"></div>
<div class="gl" style="left:16.5px;top:476.60px;width:174.5px"></div>
<div class="gl" style="left:641px;top:476.60px;width:207px"></div>
<div style="left:191px;top:478px;width:450px;height:1px;background:#bac5e0;"></div>
<div class="gl" style="left:16.5px;top:486.95px;width:174.5px"></div>
<div class="gl" style="left:641px;top:486.95px;width:207px"></div>
<div style="left:191px;top:488px;width:450px;height:1px;background:#bac5e0;"></div>
<div class="gl" style="left:16.5px;top:497.31px;width:174.5px"></div>
<div class="gl" style="left:641px;top:497.31px;width:207px"></div>
<div style="left:191px;top:498px;width:450px;height:1px;background:#bac5e0;"></div>
<div class="gl" style="left:16.5px;top:507.67px;width:174.5px"></div>
<div class="gl" style="left:641px;top:507.67px;width:207px"></div>
<div style="left:191px;top:509px;width:450px;height:1px;background:#bac5e0;"></div>
<div class="gl" style="left:16.5px;top:518.02px;width:174.5px"></div>
<div class="gl" style="left:641px;top:518.02px;width:207px"></div>
<div style="left:191px;top:519px;width:450px;height:1px;background:#bac5e0;"></div>
<div class="gl" style="left:16.5px;top:528.38px;width:831.5px"></div>
<div style="left:191px;top:529px;width:450px;height:1px;background:#bac5e0;"></div>
<div class="gl" style="left:16.5px;top:538.74px;width:831.5px"></div>
<div class="gl" style="left:16.5px;top:549.10px;width:831.5px"></div>
<div class="gl" style="left:16.5px;top:559.45px;width:831.5px"></div>
<div style="left:191px;top:247.4px;width:450px;height:1.2px;background:#f4f6fb;"></div>
<div style="left:846.8px;top:188px;width:1.4px;height:376px;background:#98a6cc;"></div>
<div style="left:643px;top:188px;width:205px;height:1px;background:#9aa4c4;"></div>
<div style="left:0px;top:247.5px;width:15.5px;height:1px;background:#e6e6e6;"></div>
<span class="t" style="left:5.78px;top:237.90px;font-size:8.6px;line-height:11px;color:#333;transform:scaleX(0.760);transform-origin:0 50%;">1</span>
<div style="left:0px;top:260.1px;width:15.5px;height:1px;background:#e6e6e6;"></div>
<span class="t" style="left:6.48px;top:249.00px;font-size:8.6px;line-height:11px;color:#333;transform:scaleX(0.760);transform-origin:0 50%;">2</span>
<div style="left:0px;top:270.46px;width:15.5px;height:1px;background:#e6e6e6;"></div>
<span class="t" style="left:6.48px;top:260.65px;font-size:8.6px;line-height:11px;color:#333;transform:scaleX(0.760);transform-origin:0 50%;">3</span>
<div style="left:0px;top:280.81px;width:15.5px;height:1px;background:#e6e6e6;"></div>
<span class="t" style="left:6.48px;top:271.01px;font-size:8.6px;line-height:11px;color:#333;transform:scaleX(0.760);transform-origin:0 50%;">4</span>
<div style="left:0px;top:291.17px;width:15.5px;height:1px;background:#e6e6e6;"></div>
<span class="t" style="left:6.48px;top:281.36px;font-size:8.6px;line-height:11px;color:#333;transform:scaleX(0.760);transform-origin:0 50%;">5</span>
<div style="left:0px;top:301.53px;width:15.5px;height:1px;background:#e6e6e6;"></div>
<span class="t" style="left:6.48px;top:291.72px;font-size:8.6px;line-height:11px;color:#333;transform:scaleX(0.760);transform-origin:0 50%;">6</span>
<div style="left:0px;top:311.88px;width:15.5px;height:1px;background:#e6e6e6;"></div>
<span class="t" style="left:6.48px;top:302.08px;font-size:8.6px;line-height:11px;color:#333;transform:scaleX(0.760);transform-origin:0 50%;">7</span>
<div style="left:0px;top:322.24px;width:15.5px;height:1px;background:#e6e6e6;"></div>
<span class="t" style="left:6.48px;top:312.43px;font-size:8.6px;line-height:11px;color:#333;transform:scaleX(0.760);transform-origin:0 50%;">8</span>
<div style="left:0px;top:332.6px;width:15.5px;height:1px;background:#e6e6e6;"></div>
<span class="t" style="left:6.48px;top:322.79px;font-size:8.6px;line-height:11px;color:#333;transform:scaleX(0.760);transform-origin:0 50%;">9</span>
<div style="left:0px;top:342.96px;width:15.5px;height:1px;background:#e6e6e6;"></div>
<span class="t" style="left:4.66px;top:333.15px;font-size:8.6px;line-height:11px;color:#333;transform:scaleX(0.760);transform-origin:0 50%;">10</span>
<div style="left:0px;top:343.456px;width:16.5px;height:10.356999999999971px;background:#e1e6e2;"></div>
<div style="left:15.2px;top:343.456px;width:1.6px;height:10.356999999999971px;background:#217346;"></div>
<div style="left:0px;top:353.31px;width:15.5px;height:1px;background:#e6e6e6;"></div>
<span class="t" style="left:4.91px;top:343.50px;font-size:8.6px;line-height:11px;color:#1e6e45;transform:scaleX(0.760);transform-origin:0 50%;">11</span>
<div style="left:0px;top:363.67px;width:15.5px;height:1px;background:#e6e6e6;"></div>
<span class="t" style="left:4.66px;top:353.86px;font-size:8.6px;line-height:11px;color:#333;transform:scaleX(0.760);transform-origin:0 50%;">12</span>
<div style="left:0px;top:374.03px;width:15.5px;height:1px;background:#e6e6e6;"></div>
<span class="t" style="left:4.66px;top:364.22px;font-size:8.6px;line-height:11px;color:#333;transform:scaleX(0.760);transform-origin:0 50%;">13</span>
<div style="left:0px;top:384.38px;width:15.5px;height:1px;background:#e6e6e6;"></div>
<span class="t" style="left:4.66px;top:374.58px;font-size:8.6px;line-height:11px;color:#333;transform:scaleX(0.760);transform-origin:0 50%;">14</span>
<div style="left:0px;top:394.74px;width:15.5px;height:1px;background:#e6e6e6;"></div>
<span class="t" style="left:4.66px;top:384.93px;font-size:8.6px;line-height:11px;color:#333;transform:scaleX(0.760);transform-origin:0 50%;">15</span>
<div style="left:0px;top:405.1px;width:15.5px;height:1px;background:#e6e6e6;"></div>
<span class="t" style="left:4.66px;top:395.29px;font-size:8.6px;line-height:11px;color:#333;transform:scaleX(0.760);transform-origin:0 50%;">16</span>
<div style="left:0px;top:415.46px;width:15.5px;height:1px;background:#e6e6e6;"></div>
<span class="t" style="left:4.66px;top:405.65px;font-size:8.6px;line-height:11px;color:#333;transform:scaleX(0.760);transform-origin:0 50%;">17</span>
<div style="left:0px;top:425.81px;width:15.5px;height:1px;background:#e6e6e6;"></div>
<span class="t" style="left:4.66px;top:416.00px;font-size:8.6px;line-height:11px;color:#333;transform:scaleX(0.760);transform-origin:0 50%;">18</span>
<div style="left:0px;top:436.17px;width:15.5px;height:1px;background:#e6e6e6;"></div>
<span class="t" style="left:4.66px;top:426.36px;font-size:8.6px;line-height:11px;color:#333;transform:scaleX(0.760);transform-origin:0 50%;">19</span>
<div style="left:0px;top:446.53px;width:15.5px;height:1px;background:#e6e6e6;"></div>
<span class="t" style="left:4.66px;top:436.72px;font-size:8.6px;line-height:11px;color:#333;transform:scaleX(0.760);transform-origin:0 50%;">20</span>
<div style="left:0px;top:456.88px;width:15.5px;height:1px;background:#e6e6e6;"></div>
<span class="t" style="left:4.66px;top:447.07px;font-size:8.6px;line-height:11px;color:#333;transform:scaleX(0.760);transform-origin:0 50%;">21</span>
<div style="left:0px;top:467.24px;width:15.5px;height:1px;background:#e6e6e6;"></div>
<span class="t" style="left:4.66px;top:457.43px;font-size:8.6px;line-height:11px;color:#333;transform:scaleX(0.760);transform-origin:0 50%;">22</span>
<div style="left:0px;top:477.6px;width:15.5px;height:1px;background:#e6e6e6;"></div>
<span class="t" style="left:4.66px;top:467.79px;font-size:8.6px;line-height:11px;color:#333;transform:scaleX(0.760);transform-origin:0 50%;">23</span>
<div style="left:0px;top:487.95px;width:15.5px;height:1px;background:#e6e6e6;"></div>
<span class="t" style="left:4.66px;top:478.15px;font-size:8.6px;line-height:11px;color:#333;transform:scaleX(0.760);transform-origin:0 50%;">24</span>
<div style="left:0px;top:498.31px;width:15.5px;height:1px;background:#e6e6e6;"></div>
<span class="t" style="left:4.66px;top:488.50px;font-size:8.6px;line-height:11px;color:#333;transform:scaleX(0.760);transform-origin:0 50%;">25</span>
<div style="left:0px;top:508.67px;width:15.5px;height:1px;background:#e6e6e6;"></div>
<span class="t" style="left:4.66px;top:498.86px;font-size:8.6px;line-height:11px;color:#333;transform:scaleX(0.760);transform-origin:0 50%;">26</span>
<div style="left:0px;top:519.02px;width:15.5px;height:1px;background:#e6e6e6;"></div>
<span class="t" style="left:4.66px;top:509.22px;font-size:8.6px;line-height:11px;color:#333;transform:scaleX(0.760);transform-origin:0 50%;">27</span>
<div style="left:0px;top:529.38px;width:15.5px;height:1px;background:#e6e6e6;"></div>
<span class="t" style="left:4.66px;top:519.57px;font-size:8.6px;line-height:11px;color:#333;transform:scaleX(0.760);transform-origin:0 50%;">28</span>
<div style="left:0px;top:539.74px;width:15.5px;height:1px;background:#e6e6e6;"></div>
<span class="t" style="left:4.66px;top:529.93px;font-size:8.6px;line-height:11px;color:#333;transform:scaleX(0.760);transform-origin:0 50%;">29</span>
<div style="left:0px;top:550.1px;width:15.5px;height:1px;background:#e6e6e6;"></div>
<span class="t" style="left:4.66px;top:540.29px;font-size:8.6px;line-height:11px;color:#333;transform:scaleX(0.760);transform-origin:0 50%;">30</span>
<div style="left:0px;top:560.45px;width:15.5px;height:1px;background:#e6e6e6;"></div>
<span class="t" style="left:4.66px;top:550.64px;font-size:8.6px;line-height:11px;color:#333;transform:scaleX(0.760);transform-origin:0 50%;">31</span>
<div style="left:0px;top:570.81px;width:15.5px;height:1px;background:#e6e6e6;"></div>
<span class="t" style="left:4.66px;top:561.00px;font-size:8.6px;line-height:11px;color:#333;transform:scaleX(0.760);transform-origin:0 50%;">32</span>
<div style="left:17px;top:212px;width:71.3px;height:14px;overflow:hidden">
<span class="t" style="left:0.00px;top:1.80px;font-size:8.6px;line-height:11px;color:#fff;font-weight:bold;letter-spacing:0.249px;">ervicios_municip</span>
</div>
<span class="t" style="left:96.50px;top:213.80px;font-size:8.6px;line-height:11px;color:#fff;font-weight:bold;letter-spacing:-0.237px;">codigo</span>
<span class="t" style="left:132.00px;top:213.80px;font-size:8.6px;line-height:11px;color:#fff;font-weight:bold;letter-spacing:-0.222px;">codigo_ruta</span>
<span class="t" style="left:194.00px;top:213.80px;font-size:8.6px;line-height:11px;color:#fff;font-weight:bold;letter-spacing:-0.029px;">direccion</span>
<span class="t" style="left:407.00px;top:213.80px;font-size:8.6px;line-height:11px;color:#fff;font-weight:bold;letter-spacing:-0.163px;">sector</span>
<span class="t" style="left:500.50px;top:213.80px;font-size:8.6px;line-height:11px;color:#fff;font-weight:bold;letter-spacing:-0.022px;">Abril</span>
<div style="left:582px;top:212px;width:58.3px;height:14px;overflow:hidden">
<span class="t" style="left:0.00px;top:1.80px;font-size:8.6px;line-height:11px;color:#fff;font-weight:bold;letter-spacing:-0.193px;">tipo_facturacion</span>
</div>
<span class="t" style="left:643.50px;top:213.80px;font-size:8.6px;line-height:11px;color:#fff;font-weight:bold;letter-spacing:-0.120px;transform:scaleX(0.959);transform-origin:0 50%;">categoria_cagua</span>
<span class="t" style="left:728.00px;top:213.80px;font-size:8.6px;line-height:11px;color:#fff;font-weight:bold;letter-spacing:-0.151px;">categoria_alcantarillado</span>
<div style="left:75.2px;top:233.4px;width:13.2px;height:13.2px;background:#f6f6f6;border:1px solid #dcdcdc;box-sizing:border-box;"></div>
<svg style="left:78.2px;top:238.4px" width="8" height="5" viewBox="0 0 8 5"><path d="M0.4 0.4 H7.6 L4 4.3 Z" fill="#505050"/></svg>
<div style="left:115.2px;top:233.4px;width:13.2px;height:13.2px;background:#f6f6f6;border:1px solid #dcdcdc;box-sizing:border-box;"></div>
<svg style="left:118.2px;top:238.4px" width="8" height="5" viewBox="0 0 8 5"><path d="M0.4 0.4 H7.6 L4 4.3 Z" fill="#505050"/></svg>
<div style="left:176.7px;top:233.4px;width:13.2px;height:13.2px;background:#f6f6f6;border:1px solid #dcdcdc;box-sizing:border-box;"></div>
<svg style="left:179.7px;top:238.4px" width="8" height="5" viewBox="0 0 8 5"><path d="M0.4 0.4 H7.6 L4 4.3 Z" fill="#505050"/></svg>
<div style="left:390.0px;top:233.4px;width:13.2px;height:13.2px;background:#f6f6f6;border:1px solid #dcdcdc;box-sizing:border-box;"></div>
<svg style="left:393.0px;top:238.4px" width="8" height="5" viewBox="0 0 8 5"><path d="M0.4 0.4 H7.6 L4 4.3 Z" fill="#505050"/></svg>
<div style="left:483.9px;top:233.4px;width:13.2px;height:13.2px;background:#f6f6f6;border:1px solid #dcdcdc;box-sizing:border-box;"></div>
<svg style="left:486.9px;top:238.4px" width="8" height="5" viewBox="0 0 8 5"><path d="M0.4 0.4 H7.6 L4 4.3 Z" fill="#505050"/></svg>
<div style="left:565.3000000000001px;top:233.4px;width:13.2px;height:13.2px;background:#f6f6f6;border:1px solid #dcdcdc;box-sizing:border-box;"></div>
<svg style="left:568.3000000000001px;top:238.4px" width="8" height="5" viewBox="0 0 8 5"><path d="M0.4 0.4 H7.6 L4 4.3 Z" fill="#505050"/></svg>
<div style="left:626.7px;top:233.4px;width:13.2px;height:13.2px;background:#f6f6f6;border:1px solid #dcdcdc;box-sizing:border-box;"></div>
<svg style="left:629.7px;top:238.4px" width="8" height="5" viewBox="0 0 8 5"><path d="M0.4 0.4 H7.6 L4 4.3 Z" fill="#505050"/></svg>
<div style="left:710.7px;top:233.4px;width:13.2px;height:13.2px;background:#f6f6f6;border:1px solid #dcdcdc;box-sizing:border-box;"></div>
<svg style="left:713.7px;top:238.4px" width="8" height="5" viewBox="0 0 8 5"><path d="M0.4 0.4 H7.6 L4 4.3 Z" fill="#505050"/></svg>
<div style="left:833.7px;top:233.4px;width:13.2px;height:13.2px;background:#f6f6f6;border:1px solid #dcdcdc;box-sizing:border-box;"></div>
<svg style="left:836.7px;top:238.4px" width="8" height="5" viewBox="0 0 8 5"><path d="M0.4 0.4 H7.6 L4 4.3 Z" fill="#505050"/></svg>
<span class="t" style="left:339.3px;top:331.05px;font-size:39.1px;line-height:50px;color:#8c9099;">Página 1</span>
<div class="c" style="left:16.5px;top:249.18px;width:73.0px;height:10px;text-align:center;"><span style="transform:scaleX(0.820);transform-origin:50% 50%">1</span></div>
<div class="c" style="left:90.5px;top:249.18px;width:40.0px;height:10px;text-align:center;"><span style="transform:scaleX(0.820);transform-origin:50% 50%">1</span></div>
<div class="c" style="left:129.5px;top:249.18px;width:61.5px;height:10px;padding-left:3px;box-sizing:border-box;"><span style="transform:scaleX(0.798);transform-origin:0 50%">1-1-0-000</span></div>
<div class="c" style="left:191px;top:249.18px;width:213px;height:10px;padding-left:4px;box-sizing:border-box;"><span style="transform:scaleX(0.929);transform-origin:0 50%">JIRON APURIMAC # 500 MZ: 24 LT: 15</span></div>
<div class="c" style="left:404px;top:249.18px;width:94px;height:10px;padding-left:3.3px;box-sizing:border-box;"><span style="transform:scaleX(0.962);transform-origin:0 50%">LA MOLINA I ETAPA</span></div>
<div class="c" style="left:498px;top:249.18px;width:81.5px;height:10px;padding-left:2.7px;box-sizing:border-box;"><span style="transform:scaleX(0.878);transform-origin:0 50%">EA22325152</span></div>
<div class="c" style="left:579.5px;top:249.18px;width:60.799999999999955px;height:10px;padding-left:2.8px;box-sizing:border-box;"><span style="transform:scaleX(0.944);transform-origin:0 50%">CONSUMO LEIDO</span></div>
<div class="c" style="left:641px;top:249.18px;width:84px;height:10px;padding-left:2.5px;box-sizing:border-box;"><span style="transform:scaleX(0.949);transform-origin:0 50%">DOMESTICO</span></div>
<div class="c" style="left:725px;top:249.18px;width:123px;height:10px;padding-left:3px;box-sizing:border-box;"><span style="transform:scaleX(0.949);transform-origin:0 50%">DOMESTICO</span></div>
<div class="c" style="left:16.5px;top:260.93px;width:73.0px;height:10px;text-align:center;"><span style="transform:scaleX(0.820);transform-origin:50% 50%">2</span></div>
<div class="c" style="left:90.5px;top:260.93px;width:40.0px;height:10px;text-align:center;"><span style="transform:scaleX(0.820);transform-origin:50% 50%">2</span></div>
<div class="c" style="left:129.5px;top:260.93px;width:61.5px;height:10px;padding-left:3px;box-sizing:border-box;"><span style="transform:scaleX(0.798);transform-origin:0 50%">1-1-0-000</span></div>
<div class="c" style="left:191px;top:260.93px;width:213px;height:10px;padding-left:4px;box-sizing:border-box;"><span style="transform:scaleX(0.972);transform-origin:0 50%">JIRON CAJAMARCA # 0</span></div>
<div class="c" style="left:404px;top:260.93px;width:175.5px;height:10px;padding-left:3.3px;box-sizing:border-box;"><span style="transform:scaleX(0.957);transform-origin:0 50%">TAHUANTINSUYO</span></div>
<div class="c" style="left:579.5px;top:260.93px;width:60.799999999999955px;height:10px;padding-left:2.8px;box-sizing:border-box;"><span style="transform:scaleX(0.950);transform-origin:0 50%">CONSUMO ASIGNADO</span></div>
<div class="c" style="left:641px;top:260.93px;width:84px;height:10px;padding-left:2.5px;box-sizing:border-box;"><span style="transform:scaleX(0.949);transform-origin:0 50%">DOMESTICO</span></div>
<div class="c" style="left:725px;top:260.93px;width:123px;height:10px;padding-left:3px;box-sizing:border-box;"><span style="transform:scaleX(0.949);transform-origin:0 50%">DOMESTICO</span></div>
<div class="c" style="left:16.5px;top:271.29px;width:73.0px;height:10px;text-align:center;"><span style="transform:scaleX(0.820);transform-origin:50% 50%">3</span></div>
<div class="c" style="left:90.5px;top:271.29px;width:40.0px;height:10px;text-align:center;"><span style="transform:scaleX(0.820);transform-origin:50% 50%">3</span></div>
<div class="c" style="left:129.5px;top:271.29px;width:61.5px;height:10px;padding-left:3px;box-sizing:border-box;"><span style="transform:scaleX(0.798);transform-origin:0 50%">1-1-0-000</span></div>
<div class="c" style="left:191px;top:271.29px;width:213px;height:10px;padding-left:4px;box-sizing:border-box;"><span style="transform:scaleX(0.958);transform-origin:0 50%">JIRON TUPAC AMARU # 43</span></div>
<div class="c" style="left:404px;top:271.29px;width:175.5px;height:10px;padding-left:3.3px;box-sizing:border-box;"><span style="transform:scaleX(0.957);transform-origin:0 50%">TAHUANTINSUYO</span></div>
<div class="c" style="left:579.5px;top:271.29px;width:60.799999999999955px;height:10px;padding-left:2.8px;box-sizing:border-box;"><span style="transform:scaleX(0.950);transform-origin:0 50%">CONSUMO ASIGNADO</span></div>
<div class="c" style="left:641px;top:271.29px;width:84px;height:10px;padding-left:2.5px;box-sizing:border-box;"><span style="transform:scaleX(0.949);transform-origin:0 50%">DOMESTICO</span></div>
<div class="c" style="left:725px;top:271.29px;width:123px;height:10px;padding-left:3px;box-sizing:border-box;"><span style="transform:scaleX(0.949);transform-origin:0 50%">DOMESTICO</span></div>
<div class="c" style="left:16.5px;top:281.64px;width:73.0px;height:10px;text-align:center;"><span style="transform:scaleX(0.820);transform-origin:50% 50%">4</span></div>
<div class="c" style="left:90.5px;top:281.64px;width:40.0px;height:10px;text-align:center;"><span style="transform:scaleX(0.820);transform-origin:50% 50%">4</span></div>
<div class="c" style="left:129.5px;top:281.64px;width:61.5px;height:10px;padding-left:3px;box-sizing:border-box;"><span style="transform:scaleX(0.798);transform-origin:0 50%">1-1-0-000</span></div>
<div class="c" style="left:191px;top:281.64px;width:213px;height:10px;padding-left:4px;box-sizing:border-box;"><span style="transform:scaleX(0.911);transform-origin:0 50%">JIRON LOS SAUCES # 100 MZ: A LT: 09</span></div>
<div class="c" style="left:404px;top:281.64px;width:94px;height:10px;padding-left:3.3px;box-sizing:border-box;"><span style="transform:scaleX(0.955);transform-origin:0 50%">LA ALAMEDA DEL EDEN</span></div>
<div class="c" style="left:498px;top:281.64px;width:81.5px;height:10px;padding-left:2.7px;box-sizing:border-box;"><span style="transform:scaleX(0.919);transform-origin:0 50%">EA22350204</span></div>
<div class="c" style="left:579.5px;top:281.64px;width:60.799999999999955px;height:10px;padding-left:2.8px;box-sizing:border-box;"><span style="transform:scaleX(0.944);transform-origin:0 50%">CONSUMO LEIDO</span></div>
<div class="c" style="left:641px;top:281.64px;width:84px;height:10px;padding-left:2.5px;box-sizing:border-box;"><span style="transform:scaleX(0.949);transform-origin:0 50%">DOMESTICO</span></div>
<div class="c" style="left:725px;top:281.64px;width:123px;height:10px;padding-left:3px;box-sizing:border-box;"><span style="transform:scaleX(0.949);transform-origin:0 50%">DOMESTICO</span></div>
<div class="c" style="left:16.5px;top:292.00px;width:73.0px;height:10px;text-align:center;"><span style="transform:scaleX(0.820);transform-origin:50% 50%">5</span></div>
<div class="c" style="left:90.5px;top:292.00px;width:40.0px;height:10px;text-align:center;"><span style="transform:scaleX(0.820);transform-origin:50% 50%">5</span></div>
<div class="c" style="left:129.5px;top:292.00px;width:61.5px;height:10px;padding-left:3px;box-sizing:border-box;"><span style="transform:scaleX(0.798);transform-origin:0 50%">1-1-0-000</span></div>
<div class="c" style="left:191px;top:292.00px;width:213px;height:10px;padding-left:4px;box-sizing:border-box;"><span style="transform:scaleX(0.920);transform-origin:0 50%">JR SANTA ISABEL #  CDRA: 8 DPTO:  MZ: 14 LT: 13</span></div>
<div class="c" style="left:404px;top:292.00px;width:94px;height:10px;padding-left:3.3px;box-sizing:border-box;"><span style="transform:scaleX(0.960);transform-origin:0 50%">SANTA ISABEL</span></div>
<div class="c" style="left:498px;top:292.00px;width:81.5px;height:10px;padding-left:2.7px;box-sizing:border-box;"><span style="transform:scaleX(0.878);transform-origin:0 50%">EA22324018</span></div>
<div class="c" style="left:579.5px;top:292.00px;width:60.799999999999955px;height:10px;padding-left:2.8px;box-sizing:border-box;"><span style="transform:scaleX(0.944);transform-origin:0 50%">CONSUMO LEIDO</span></div>
<div class="c" style="left:641px;top:292.00px;width:84px;height:10px;padding-left:2.5px;box-sizing:border-box;"><span style="transform:scaleX(0.949);transform-origin:0 50%">DOMESTICO</span></div>
<div class="c" style="left:725px;top:292.00px;width:123px;height:10px;padding-left:3px;box-sizing:border-box;"><span style="transform:scaleX(0.949);transform-origin:0 50%">DOMESTICO</span></div>
<div class="c" style="left:16.5px;top:302.36px;width:73.0px;height:10px;text-align:center;"><span style="transform:scaleX(0.820);transform-origin:50% 50%">6</span></div>
<div class="c" style="left:90.5px;top:302.36px;width:40.0px;height:10px;text-align:center;"><span style="transform:scaleX(0.820);transform-origin:50% 50%">6</span></div>
<div class="c" style="left:129.5px;top:302.36px;width:61.5px;height:10px;padding-left:3px;box-sizing:border-box;"><span style="transform:scaleX(0.798);transform-origin:0 50%">1-1-0-000</span></div>
<div class="c" style="left:191px;top:302.36px;width:213px;height:10px;padding-left:4px;box-sizing:border-box;"><span style="transform:scaleX(0.923);transform-origin:0 50%">JIRON SAN MARCOS # 300 MZ: 19 LT: 06</span></div>
<div class="c" style="left:404px;top:302.36px;width:94px;height:10px;padding-left:3.3px;box-sizing:border-box;"><span style="transform:scaleX(0.963);transform-origin:0 50%">BARRIO ALTO IV ETAPA</span></div>
<div class="c" style="left:498px;top:302.36px;width:81.5px;height:10px;padding-left:2.7px;box-sizing:border-box;"><span style="transform:scaleX(0.878);transform-origin:0 50%">EA22327132</span></div>
<div class="c" style="left:579.5px;top:302.36px;width:60.799999999999955px;height:10px;padding-left:2.8px;box-sizing:border-box;"><span style="transform:scaleX(0.944);transform-origin:0 50%">CONSUMO LEIDO</span></div>
<div class="c" style="left:641px;top:302.36px;width:84px;height:10px;padding-left:2.5px;box-sizing:border-box;"><span style="transform:scaleX(0.949);transform-origin:0 50%">DOMESTICO</span></div>
<div class="c" style="left:725px;top:302.36px;width:123px;height:10px;padding-left:3px;box-sizing:border-box;"><span style="transform:scaleX(0.949);transform-origin:0 50%">DOMESTICO</span></div>
<div class="c" style="left:16.5px;top:312.71px;width:73.0px;height:10px;text-align:center;"><span style="transform:scaleX(0.820);transform-origin:50% 50%">7</span></div>
<div class="c" style="left:90.5px;top:312.71px;width:40.0px;height:10px;text-align:center;"><span style="transform:scaleX(0.820);transform-origin:50% 50%">7</span></div>
<div class="c" style="left:129.5px;top:312.71px;width:61.5px;height:10px;padding-left:3px;box-sizing:border-box;"><span style="transform:scaleX(0.798);transform-origin:0 50%">1-1-0-000</span></div>
<div class="c" style="left:191px;top:312.71px;width:213px;height:10px;padding-left:4px;box-sizing:border-box;"><span style="transform:scaleX(0.930);transform-origin:0 50%">JIRON VILLA HERMOSA # 600 MZ: 26 LT: 05</span></div>
<div class="c" style="left:404px;top:312.71px;width:94px;height:10px;padding-left:3.3px;box-sizing:border-box;"><span style="transform:scaleX(0.949);transform-origin:0 50%">LOS OLIVOS NUEVA CAJAMARCA</span></div>
<div class="c" style="left:498px;top:312.71px;width:81.5px;height:10px;padding-left:2.7px;box-sizing:border-box;"><span style="transform:scaleX(0.919);transform-origin:0 50%">EA22352484</span></div>
<div class="c" style="left:579.5px;top:312.71px;width:60.799999999999955px;height:10px;padding-left:2.8px;box-sizing:border-box;"><span style="transform:scaleX(0.944);transform-origin:0 50%">CONSUMO LEIDO</span></div>
<div class="c" style="left:641px;top:312.71px;width:84px;height:10px;padding-left:2.5px;box-sizing:border-box;"><span style="transform:scaleX(0.949);transform-origin:0 50%">DOMESTICO</span></div>
<div class="c" style="left:725px;top:312.71px;width:123px;height:10px;padding-left:3px;box-sizing:border-box;"><span style="transform:scaleX(0.949);transform-origin:0 50%">DOMESTICO</span></div>
<div class="c" style="left:16.5px;top:323.07px;width:73.0px;height:10px;text-align:center;"><span style="transform:scaleX(0.820);transform-origin:50% 50%">8</span></div>
<div class="c" style="left:90.5px;top:323.07px;width:40.0px;height:10px;text-align:center;"><span style="transform:scaleX(0.820);transform-origin:50% 50%">8</span></div>
<div class="c" style="left:129.5px;top:323.07px;width:61.5px;height:10px;padding-left:3px;box-sizing:border-box;"><span style="transform:scaleX(0.798);transform-origin:0 50%">1-1-0-000</span></div>
<div class="c" style="left:191px;top:323.07px;width:213px;height:10px;padding-left:4px;box-sizing:border-box;"><span style="transform:scaleX(0.948);transform-origin:0 50%">JIRON AMAUTA # 200 MZ: 7 LT: 8</span></div>
<div class="c" style="left:404px;top:323.07px;width:94px;height:10px;padding-left:3.3px;box-sizing:border-box;"><span style="transform:scaleX(0.962);transform-origin:0 50%">LA MOLINA I ETAPA</span></div>
<div class="c" style="left:498px;top:323.07px;width:81.5px;height:10px;padding-left:2.7px;box-sizing:border-box;"><span style="transform:scaleX(0.910);transform-origin:0 50%">22325336</span></div>
<svg style="left:498.5px;top:323.242px" width="4" height="4" viewBox="0 0 4 4"><path d="M0 0 H3.5 L0 3.5 Z" fill="#1e7a46"/></svg>
<div class="c" style="left:579.5px;top:323.07px;width:60.799999999999955px;height:10px;padding-left:2.8px;box-sizing:border-box;"><span style="transform:scaleX(0.944);transform-origin:0 50%">CONSUMO LEIDO</span></div>
<div class="c" style="left:641px;top:323.07px;width:84px;height:10px;padding-left:2.5px;box-sizing:border-box;"><span style="transform:scaleX(0.949);transform-origin:0 50%">DOMESTICO</span></div>
<div class="c" style="left:725px;top:323.07px;width:123px;height:10px;padding-left:3px;box-sizing:border-box;"><span style="transform:scaleX(0.949);transform-origin:0 50%">DOMESTICO</span></div>
<div class="c" style="left:16.5px;top:333.43px;width:73.0px;height:10px;text-align:center;"><span style="transform:scaleX(0.820);transform-origin:50% 50%">9</span></div>
<div class="c" style="left:90.5px;top:333.43px;width:40.0px;height:10px;text-align:center;"><span style="transform:scaleX(0.820);transform-origin:50% 50%">9</span></div>
<div class="c" style="left:129.5px;top:333.43px;width:61.5px;height:10px;padding-left:3px;box-sizing:border-box;"><span style="transform:scaleX(0.798);transform-origin:0 50%">1-1-0-000</span></div>
<div class="c" style="left:191px;top:333.43px;width:213px;height:10px;padding-left:4px;box-sizing:border-box;"><span style="transform:scaleX(0.933);transform-origin:0 50%">PASAJE JUNIN # 200 MZ: 09 LT: 2L</span></div>
<div class="c" style="left:404px;top:333.43px;width:94px;height:10px;padding-left:3.3px;box-sizing:border-box;"><span style="transform:scaleX(0.941);transform-origin:0 50%">AMPLIACION LOS INCA</span></div>
<div class="c" style="left:498px;top:333.43px;width:81.5px;height:10px;padding-left:2.7px;box-sizing:border-box;"><span style="transform:scaleX(0.849);transform-origin:0 50%">EA22350110</span></div>
<div class="c" style="left:579.5px;top:333.43px;width:60.799999999999955px;height:10px;padding-left:2.8px;box-sizing:border-box;"><span style="transform:scaleX(0.944);transform-origin:0 50%">CONSUMO LEIDO</span></div>
<div class="c" style="left:641px;top:333.43px;width:84px;height:10px;padding-left:2.5px;box-sizing:border-box;"><span style="transform:scaleX(0.949);transform-origin:0 50%">DOMESTICO</span></div>
<div class="c" style="left:725px;top:333.43px;width:123px;height:10px;padding-left:3px;box-sizing:border-box;"><span style="transform:scaleX(0.949);transform-origin:0 50%">DOMESTICO</span></div>
<div class="c" style="left:16.5px;top:343.78px;width:73.0px;height:10px;text-align:center;"><span style="transform:scaleX(0.820);transform-origin:50% 50%">10</span></div>
<div class="c" style="left:90.5px;top:343.78px;width:40.0px;height:10px;text-align:center;"><span style="transform:scaleX(0.820);transform-origin:50% 50%">10</span></div>
<div class="c" style="left:129.5px;top:343.78px;width:61.5px;height:10px;padding-left:3px;box-sizing:border-box;"><span style="transform:scaleX(0.798);transform-origin:0 50%">1-1-0-000</span></div>
<div class="c" style="left:191px;top:343.78px;width:213px;height:10px;padding-left:4px;box-sizing:border-box;"><span style="transform:scaleX(0.940);transform-origin:0 50%">JIRON UCRANIA # 0 MZ: S/N LT: S/N</span></div>
<div class="c" style="left:404px;top:343.78px;width:175.5px;height:10px;padding-left:3.3px;box-sizing:border-box;"><span style="transform:scaleX(0.941);transform-origin:0 50%">CAS. UCRANIA</span></div>
<div class="c" style="left:579.5px;top:343.78px;width:60.799999999999955px;height:10px;padding-left:2.8px;box-sizing:border-box;"><span style="transform:scaleX(0.950);transform-origin:0 50%">CONSUMO ASIGNADO</span></div>
<div class="c" style="left:641px;top:343.78px;width:84px;height:10px;padding-left:2.5px;box-sizing:border-box;"><span style="transform:scaleX(0.949);transform-origin:0 50%">DOMESTICO</span></div>
<div class="c" style="left:725px;top:343.78px;width:123px;height:10px;padding-left:3px;box-sizing:border-box;"><span style="transform:scaleX(0.949);transform-origin:0 50%">DOMESTICO</span></div>
<div class="c" style="left:16.5px;top:354.14px;width:73.0px;height:10px;text-align:center;"><span style="transform:scaleX(0.820);transform-origin:50% 50%">11</span></div>
<div class="c" style="left:90.5px;top:354.14px;width:40.0px;height:10px;text-align:center;"><span style="transform:scaleX(0.820);transform-origin:50% 50%">11</span></div>
<div class="c" style="left:129.5px;top:354.14px;width:61.5px;height:10px;padding-left:3px;box-sizing:border-box;"><span style="transform:scaleX(0.798);transform-origin:0 50%">1-1-0-000</span></div>
<div class="c" style="left:191px;top:354.14px;width:213px;height:10px;padding-left:4px;box-sizing:border-box;"><span style="transform:scaleX(0.904);transform-origin:0 50%">JIRON CHICLAYO # 0 MZ: 16 LT: 19</span></div>
<div class="c" style="left:404px;top:354.14px;width:94px;height:10px;padding-left:3.3px;box-sizing:border-box;"><span style="transform:scaleX(0.957);transform-origin:0 50%">JUAN VELASCO ALVARADO</span></div>
<div class="c" style="left:498px;top:354.14px;width:81.5px;height:10px;padding-left:2.7px;box-sizing:border-box;"><span style="transform:scaleX(0.878);transform-origin:0 50%">EA22324031</span></div>
<div class="c" style="left:579.5px;top:354.14px;width:60.799999999999955px;height:10px;padding-left:2.8px;box-sizing:border-box;"><span style="transform:scaleX(0.944);transform-origin:0 50%">CONSUMO LEIDO</span></div>
<div class="c" style="left:641px;top:354.14px;width:84px;height:10px;padding-left:2.5px;box-sizing:border-box;"><span style="transform:scaleX(0.949);transform-origin:0 50%">DOMESTICO</span></div>
<div class="c" style="left:725px;top:354.14px;width:123px;height:10px;padding-left:3px;box-sizing:border-box;"><span style="transform:scaleX(0.949);transform-origin:0 50%">DOMESTICO</span></div>
<div class="c" style="left:16.5px;top:364.50px;width:73.0px;height:10px;text-align:center;"><span style="transform:scaleX(0.820);transform-origin:50% 50%">12</span></div>
<div class="c" style="left:90.5px;top:364.50px;width:40.0px;height:10px;text-align:center;"><span style="transform:scaleX(0.820);transform-origin:50% 50%">12</span></div>
<div class="c" style="left:129.5px;top:364.50px;width:61.5px;height:10px;padding-left:3px;box-sizing:border-box;"><span style="transform:scaleX(0.798);transform-origin:0 50%">1-1-0-000</span></div>
<div class="c" style="left:191px;top:364.50px;width:213px;height:10px;padding-left:4px;box-sizing:border-box;"><span style="transform:scaleX(0.899);transform-origin:0 50%">JIRON IQUITOS # 700</span></div>
<div class="c" style="left:404px;top:364.50px;width:94px;height:10px;padding-left:3.3px;box-sizing:border-box;"><span style="transform:scaleX(0.955);transform-origin:0 50%">NUEVA CAJAMARCA CENTRO</span></div>
<div class="c" style="left:498px;top:364.50px;width:81.5px;height:10px;padding-left:2.7px;box-sizing:border-box;"><span style="transform:scaleX(0.910);transform-origin:0 50%">22350992</span></div>
<svg style="left:498.5px;top:364.67px" width="4" height="4" viewBox="0 0 4 4"><path d="M0 0 H3.5 L0 3.5 Z" fill="#1e7a46"/></svg>
<div class="c" style="left:579.5px;top:364.50px;width:60.799999999999955px;height:10px;padding-left:2.8px;box-sizing:border-box;"><span style="transform:scaleX(0.944);transform-origin:0 50%">CONSUMO LEIDO</span></div>
<div class="c" style="left:641px;top:364.50px;width:84px;height:10px;padding-left:2.5px;box-sizing:border-box;"><span style="transform:scaleX(0.949);transform-origin:0 50%">DOMESTICO</span></div>
<div class="c" style="left:725px;top:364.50px;width:123px;height:10px;padding-left:3px;box-sizing:border-box;"><span style="transform:scaleX(0.949);transform-origin:0 50%">DOMESTICO</span></div>
<div class="c" style="left:16.5px;top:374.86px;width:73.0px;height:10px;text-align:center;"><span style="transform:scaleX(0.820);transform-origin:50% 50%">13</span></div>
<div class="c" style="left:90.5px;top:374.86px;width:40.0px;height:10px;text-align:center;"><span style="transform:scaleX(0.820);transform-origin:50% 50%">13</span></div>
<div class="c" style="left:129.5px;top:374.86px;width:61.5px;height:10px;padding-left:3px;box-sizing:border-box;"><span style="transform:scaleX(0.798);transform-origin:0 50%">1-1-0-000</span></div>
<div class="c" style="left:191px;top:374.86px;width:213px;height:10px;padding-left:4px;box-sizing:border-box;"><span style="transform:scaleX(0.924);transform-origin:0 50%">JR SAN MATEO #  CDRA: 1 DPTO:  MZ: 05A LT: 10</span></div>
<div class="c" style="left:404px;top:374.86px;width:94px;height:10px;padding-left:3.3px;box-sizing:border-box;"><span style="transform:scaleX(0.955);transform-origin:0 50%">DON CABRERA II ETAPA</span></div>
<div class="c" style="left:498px;top:374.86px;width:81.5px;height:10px;padding-left:2.7px;box-sizing:border-box;"><span style="transform:scaleX(0.919);transform-origin:0 50%">EA22323778</span></div>
<div class="c" style="left:579.5px;top:374.86px;width:60.799999999999955px;height:10px;padding-left:2.8px;box-sizing:border-box;"><span style="transform:scaleX(0.944);transform-origin:0 50%">CONSUMO LEIDO</span></div>
<div class="c" style="left:641px;top:374.86px;width:84px;height:10px;padding-left:2.5px;box-sizing:border-box;"><span style="transform:scaleX(0.949);transform-origin:0 50%">DOMESTICO</span></div>
<div class="c" style="left:725px;top:374.86px;width:123px;height:10px;padding-left:3px;box-sizing:border-box;"><span style="transform:scaleX(0.949);transform-origin:0 50%">DOMESTICO</span></div>
<div class="c" style="left:16.5px;top:385.21px;width:73.0px;height:10px;text-align:center;"><span style="transform:scaleX(0.820);transform-origin:50% 50%">14</span></div>
<div class="c" style="left:90.5px;top:385.21px;width:40.0px;height:10px;text-align:center;"><span style="transform:scaleX(0.820);transform-origin:50% 50%">14</span></div>
<div class="c" style="left:129.5px;top:385.21px;width:61.5px;height:10px;padding-left:3px;box-sizing:border-box;"><span style="transform:scaleX(0.798);transform-origin:0 50%">1-1-0-000</span></div>
<div class="c" style="left:191px;top:385.21px;width:213px;height:10px;padding-left:4px;box-sizing:border-box;"><span style="transform:scaleX(0.915);transform-origin:0 50%">JIRON LOS ANGELES # 200 MZ: 40</span></div>
<div class="c" style="left:404px;top:385.21px;width:94px;height:10px;padding-left:3.3px;box-sizing:border-box;"><span style="transform:scaleX(0.942);transform-origin:0 50%">LAS FLORES</span></div>
<div class="c" style="left:498px;top:385.21px;width:81.5px;height:10px;padding-left:2.7px;box-sizing:border-box;"><span style="transform:scaleX(0.919);transform-origin:0 50%">EA22325693</span></div>
<div class="c" style="left:579.5px;top:385.21px;width:60.799999999999955px;height:10px;padding-left:2.8px;box-sizing:border-box;"><span style="transform:scaleX(0.944);transform-origin:0 50%">CONSUMO LEIDO</span></div>
<div class="c" style="left:641px;top:385.21px;width:84px;height:10px;padding-left:2.5px;box-sizing:border-box;"><span style="transform:scaleX(0.949);transform-origin:0 50%">DOMESTICO</span></div>
<div class="c" style="left:725px;top:385.21px;width:123px;height:10px;padding-left:3px;box-sizing:border-box;"><span style="transform:scaleX(0.949);transform-origin:0 50%">DOMESTICO</span></div>
<div class="c" style="left:16.5px;top:395.57px;width:73.0px;height:10px;text-align:center;"><span style="transform:scaleX(0.820);transform-origin:50% 50%">15</span></div>
<div class="c" style="left:90.5px;top:395.57px;width:40.0px;height:10px;text-align:center;"><span style="transform:scaleX(0.820);transform-origin:50% 50%">15</span></div>
<div class="c" style="left:129.5px;top:395.57px;width:61.5px;height:10px;padding-left:3px;box-sizing:border-box;"><span style="transform:scaleX(0.798);transform-origin:0 50%">1-1-0-000</span></div>
<div class="c" style="left:191px;top:395.57px;width:213px;height:10px;padding-left:4px;box-sizing:border-box;"><span style="transform:scaleX(0.897);transform-origin:0 50%">JIRON BOLOGNESI # 1100 MZ: 08 LT: 02</span></div>
<div class="c" style="left:404px;top:395.57px;width:94px;height:10px;padding-left:3.3px;box-sizing:border-box;"><span style="transform:scaleX(0.957);transform-origin:0 50%">JUAN VELASCO ALVARADO</span></div>
<div class="c" style="left:498px;top:395.57px;width:81.5px;height:10px;padding-left:2.7px;box-sizing:border-box;"><span style="transform:scaleX(0.919);transform-origin:0 50%">EA22323984</span></div>
<div class="c" style="left:579.5px;top:395.57px;width:60.799999999999955px;height:10px;padding-left:2.8px;box-sizing:border-box;"><span style="transform:scaleX(0.944);transform-origin:0 50%">CONSUMO LEIDO</span></div>
<div class="c" style="left:641px;top:395.57px;width:84px;height:10px;padding-left:2.5px;box-sizing:border-box;"><span style="transform:scaleX(0.949);transform-origin:0 50%">DOMESTICO</span></div>
<div class="c" style="left:725px;top:395.57px;width:123px;height:10px;padding-left:3px;box-sizing:border-box;"><span style="transform:scaleX(0.949);transform-origin:0 50%">DOMESTICO</span></div>
<div class="c" style="left:16.5px;top:405.93px;width:73.0px;height:10px;text-align:center;"><span style="transform:scaleX(0.820);transform-origin:50% 50%">16</span></div>
<div class="c" style="left:90.5px;top:405.93px;width:40.0px;height:10px;text-align:center;"><span style="transform:scaleX(0.820);transform-origin:50% 50%">16</span></div>
<div class="c" style="left:129.5px;top:405.93px;width:61.5px;height:10px;padding-left:3px;box-sizing:border-box;"><span style="transform:scaleX(0.798);transform-origin:0 50%">1-1-0-000</span></div>
<div class="c" style="left:191px;top:405.93px;width:213px;height:10px;padding-left:4px;box-sizing:border-box;"><span style="transform:scaleX(0.905);transform-origin:0 50%">JIRON LOS SAUCES # 100 MZ: F LT: 14</span></div>
<div class="c" style="left:404px;top:405.93px;width:94px;height:10px;padding-left:3.3px;box-sizing:border-box;"><span style="transform:scaleX(0.955);transform-origin:0 50%">LA ALAMEDA DEL EDEN</span></div>
<div class="c" style="left:498px;top:405.93px;width:81.5px;height:10px;padding-left:2.7px;box-sizing:border-box;"><span style="transform:scaleX(0.878);transform-origin:0 50%">EA22351766</span></div>
<div class="c" style="left:579.5px;top:405.93px;width:60.799999999999955px;height:10px;padding-left:2.8px;box-sizing:border-box;"><span style="transform:scaleX(0.944);transform-origin:0 50%">CONSUMO LEIDO</span></div>
<div class="c" style="left:641px;top:405.93px;width:84px;height:10px;padding-left:2.5px;box-sizing:border-box;"><span style="transform:scaleX(0.949);transform-origin:0 50%">DOMESTICO</span></div>
<div class="c" style="left:725px;top:405.93px;width:123px;height:10px;padding-left:3px;box-sizing:border-box;"><span style="transform:scaleX(0.949);transform-origin:0 50%">DOMESTICO</span></div>
<div class="c" style="left:16.5px;top:416.28px;width:73.0px;height:10px;text-align:center;"><span style="transform:scaleX(0.820);transform-origin:50% 50%">17</span></div>
<div class="c" style="left:90.5px;top:416.28px;width:40.0px;height:10px;text-align:center;"><span style="transform:scaleX(0.820);transform-origin:50% 50%">17</span></div>
<div class="c" style="left:129.5px;top:416.28px;width:61.5px;height:10px;padding-left:3px;box-sizing:border-box;"><span style="transform:scaleX(0.798);transform-origin:0 50%">1-1-0-000</span></div>
<div class="c" style="left:191px;top:416.28px;width:213px;height:10px;padding-left:4px;box-sizing:border-box;"><span style="transform:scaleX(0.912);transform-origin:0 50%">JIRON MOQUEGUA # 500 MZ: 34 LT: 1</span></div>
<div class="c" style="left:404px;top:416.28px;width:94px;height:10px;padding-left:3.3px;box-sizing:border-box;"><span style="transform:scaleX(0.962);transform-origin:0 50%">LA MOLINA I ETAPA</span></div>
<div class="c" style="left:498px;top:416.28px;width:81.5px;height:10px;padding-left:2.7px;box-sizing:border-box;"><span style="transform:scaleX(0.919);transform-origin:0 50%">EA22328024</span></div>
<div class="c" style="left:579.5px;top:416.28px;width:60.799999999999955px;height:10px;padding-left:2.8px;box-sizing:border-box;"><span style="transform:scaleX(0.944);transform-origin:0 50%">CONSUMO LEIDO</span></div>
<div class="c" style="left:641px;top:416.28px;width:84px;height:10px;padding-left:2.5px;box-sizing:border-box;"><span style="transform:scaleX(0.949);transform-origin:0 50%">COMERCIAL</span></div>
<div class="c" style="left:725px;top:416.28px;width:123px;height:10px;padding-left:3px;box-sizing:border-box;"><span style="transform:scaleX(0.949);transform-origin:0 50%">COMERCIAL</span></div>
<div class="c" style="left:16.5px;top:426.64px;width:73.0px;height:10px;text-align:center;"><span style="transform:scaleX(0.820);transform-origin:50% 50%">18</span></div>
<div class="c" style="left:90.5px;top:426.64px;width:40.0px;height:10px;text-align:center;"><span style="transform:scaleX(0.820);transform-origin:50% 50%">18</span></div>
<div class="c" style="left:129.5px;top:426.64px;width:61.5px;height:10px;padding-left:3px;box-sizing:border-box;"><span style="transform:scaleX(0.798);transform-origin:0 50%">1-1-0-000</span></div>
<div class="c" style="left:191px;top:426.64px;width:213px;height:10px;padding-left:4px;box-sizing:border-box;"><span style="transform:scaleX(0.932);transform-origin:0 50%">JIRON JUAN VELAZCO ALVARADO # 100 MZ: 7 LT: 3A2E</span></div>
<div class="c" style="left:404px;top:426.64px;width:94px;height:10px;padding-left:3.3px;box-sizing:border-box;"><span style="transform:scaleX(0.957);transform-origin:0 50%">JUAN VELASCO ALVARADO</span></div>
<div class="c" style="left:498px;top:426.64px;width:81.5px;height:10px;padding-left:2.7px;box-sizing:border-box;"><span style="transform:scaleX(0.919);transform-origin:0 50%">EA22324266</span></div>
<div class="c" style="left:579.5px;top:426.64px;width:60.799999999999955px;height:10px;padding-left:2.8px;box-sizing:border-box;"><span style="transform:scaleX(0.944);transform-origin:0 50%">CONSUMO LEIDO</span></div>
<div class="c" style="left:641px;top:426.64px;width:84px;height:10px;padding-left:2.5px;box-sizing:border-box;"><span style="transform:scaleX(0.949);transform-origin:0 50%">DOMESTICO</span></div>
<div class="c" style="left:725px;top:426.64px;width:123px;height:10px;padding-left:3px;box-sizing:border-box;"><span style="transform:scaleX(0.949);transform-origin:0 50%">DOMESTICO</span></div>
<div class="c" style="left:16.5px;top:437.00px;width:73.0px;height:10px;text-align:center;"><span style="transform:scaleX(0.820);transform-origin:50% 50%">19</span></div>
<div class="c" style="left:90.5px;top:437.00px;width:40.0px;height:10px;text-align:center;"><span style="transform:scaleX(0.820);transform-origin:50% 50%">19</span></div>
<div class="c" style="left:129.5px;top:437.00px;width:61.5px;height:10px;padding-left:3px;box-sizing:border-box;"><span style="transform:scaleX(0.798);transform-origin:0 50%">1-1-0-000</span></div>
<div class="c" style="left:191px;top:437.00px;width:213px;height:10px;padding-left:4px;box-sizing:border-box;"><span style="transform:scaleX(0.923);transform-origin:0 50%">JIRON PIURA # 200</span></div>
<div class="c" style="left:404px;top:437.00px;width:175.5px;height:10px;padding-left:3.3px;box-sizing:border-box;"><span style="transform:scaleX(0.955);transform-origin:0 50%">NUEVA CAJAMARCA CENTRO</span></div>
<div class="c" style="left:579.5px;top:437.00px;width:60.799999999999955px;height:10px;padding-left:2.8px;box-sizing:border-box;"><span style="transform:scaleX(0.950);transform-origin:0 50%">CONSUMO ASIGNADO</span></div>
<div class="c" style="left:641px;top:437.00px;width:84px;height:10px;padding-left:2.5px;box-sizing:border-box;"><span style="transform:scaleX(0.949);transform-origin:0 50%">DOMESTICO</span></div>
<div class="c" style="left:725px;top:437.00px;width:123px;height:10px;padding-left:3px;box-sizing:border-box;"><span style="transform:scaleX(0.949);transform-origin:0 50%">DOMESTICO</span></div>
<div class="c" style="left:16.5px;top:447.35px;width:73.0px;height:10px;text-align:center;"><span style="transform:scaleX(0.820);transform-origin:50% 50%">20</span></div>
<div class="c" style="left:90.5px;top:447.35px;width:40.0px;height:10px;text-align:center;"><span style="transform:scaleX(0.820);transform-origin:50% 50%">20</span></div>
<div class="c" style="left:129.5px;top:447.35px;width:61.5px;height:10px;padding-left:3px;box-sizing:border-box;"><span style="transform:scaleX(0.798);transform-origin:0 50%">1-1-0-000</span></div>
<div class="c" style="left:191px;top:447.35px;width:213px;height:10px;padding-left:4px;box-sizing:border-box;"><span style="transform:scaleX(0.916);transform-origin:0 50%">JR LAS DELICIAS #  CDRA: 2 DPTO:  MZ: 1 LT: 3B</span></div>
<div class="c" style="left:404px;top:447.35px;width:94px;height:10px;padding-left:3.3px;box-sizing:border-box;"><span style="transform:scaleX(0.964);transform-origin:0 50%">BARRIO ALTO</span></div>
<div class="c" style="left:498px;top:447.35px;width:81.5px;height:10px;padding-left:2.7px;box-sizing:border-box;"><span style="transform:scaleX(0.919);transform-origin:0 50%">EA22323808</span></div>
<div class="c" style="left:579.5px;top:447.35px;width:60.799999999999955px;height:10px;padding-left:2.8px;box-sizing:border-box;"><span style="transform:scaleX(0.944);transform-origin:0 50%">CONSUMO LEIDO</span></div>
<div class="c" style="left:641px;top:447.35px;width:84px;height:10px;padding-left:2.5px;box-sizing:border-box;"><span style="transform:scaleX(0.949);transform-origin:0 50%">DOMESTICO</span></div>
<div class="c" style="left:725px;top:447.35px;width:123px;height:10px;padding-left:3px;box-sizing:border-box;"><span style="transform:scaleX(0.949);transform-origin:0 50%">DOMESTICO</span></div>
<div class="c" style="left:16.5px;top:457.71px;width:73.0px;height:10px;text-align:center;"><span style="transform:scaleX(0.820);transform-origin:50% 50%">21</span></div>
<div class="c" style="left:90.5px;top:457.71px;width:40.0px;height:10px;text-align:center;"><span style="transform:scaleX(0.820);transform-origin:50% 50%">21</span></div>
<div class="c" style="left:129.5px;top:457.71px;width:61.5px;height:10px;padding-left:3px;box-sizing:border-box;"><span style="transform:scaleX(0.798);transform-origin:0 50%">1-1-0-000</span></div>
<div class="c" style="left:191px;top:457.71px;width:213px;height:10px;padding-left:4px;box-sizing:border-box;"><span style="transform:scaleX(0.909);transform-origin:0 50%">JR LOS SAUCES #  CDRA: 1 DPTO:  MZ: A LT: 13</span></div>
<div class="c" style="left:404px;top:457.71px;width:94px;height:10px;padding-left:3.3px;box-sizing:border-box;"><span style="transform:scaleX(0.955);transform-origin:0 50%">LA ALAMEDA DEL EDEN</span></div>
<div class="c" style="left:498px;top:457.71px;width:81.5px;height:10px;padding-left:2.7px;box-sizing:border-box;"><span style="transform:scaleX(0.919);transform-origin:0 50%">EA22352467</span></div>
<div class="c" style="left:579.5px;top:457.71px;width:60.799999999999955px;height:10px;padding-left:2.8px;box-sizing:border-box;"><span style="transform:scaleX(0.944);transform-origin:0 50%">CONSUMO LEIDO</span></div>
<div class="c" style="left:641px;top:457.71px;width:84px;height:10px;padding-left:2.5px;box-sizing:border-box;"><span style="transform:scaleX(0.949);transform-origin:0 50%">COMERCIAL</span></div>
<div class="c" style="left:725px;top:457.71px;width:123px;height:10px;padding-left:3px;box-sizing:border-box;"><span style="transform:scaleX(0.949);transform-origin:0 50%">COMERCIAL</span></div>
<div class="c" style="left:16.5px;top:468.07px;width:73.0px;height:10px;text-align:center;"><span style="transform:scaleX(0.820);transform-origin:50% 50%">22</span></div>
<div class="c" style="left:90.5px;top:468.07px;width:40.0px;height:10px;text-align:center;"><span style="transform:scaleX(0.820);transform-origin:50% 50%">22</span></div>
<div class="c" style="left:129.5px;top:468.07px;width:61.5px;height:10px;padding-left:3px;box-sizing:border-box;"><span style="transform:scaleX(0.798);transform-origin:0 50%">1-1-0-000</span></div>
<div class="c" style="left:191px;top:468.07px;width:213px;height:10px;padding-left:4px;box-sizing:border-box;"><span style="transform:scaleX(0.902);transform-origin:0 50%">JR PUNO #  CDRA: 4 DPTO:  MZ: 14 LT: 16</span></div>
<div class="c" style="left:404px;top:468.07px;width:94px;height:10px;padding-left:3.3px;box-sizing:border-box;"><span style="transform:scaleX(0.962);transform-origin:0 50%">LA MOLINA I ETAPA</span></div>
<div class="c" style="left:498px;top:468.07px;width:81.5px;height:10px;padding-left:2.7px;box-sizing:border-box;"><span style="transform:scaleX(0.878);transform-origin:0 50%">EA22325179</span></div>
<div class="c" style="left:579.5px;top:468.07px;width:60.799999999999955px;height:10px;padding-left:2.8px;box-sizing:border-box;"><span style="transform:scaleX(0.944);transform-origin:0 50%">CONSUMO LEIDO</span></div>
<div class="c" style="left:641px;top:468.07px;width:84px;height:10px;padding-left:2.5px;box-sizing:border-box;"><span style="transform:scaleX(0.949);transform-origin:0 50%">DOMESTICO</span></div>
<div class="c" style="left:725px;top:468.07px;width:123px;height:10px;padding-left:3px;box-sizing:border-box;"><span style="transform:scaleX(0.949);transform-origin:0 50%">DOMESTICO</span></div>
<div class="c" style="left:16.5px;top:478.43px;width:73.0px;height:10px;text-align:center;"><span style="transform:scaleX(0.820);transform-origin:50% 50%">23</span></div>
<div class="c" style="left:90.5px;top:478.43px;width:40.0px;height:10px;text-align:center;"><span style="transform:scaleX(0.820);transform-origin:50% 50%">23</span></div>
<div class="c" style="left:129.5px;top:478.43px;width:61.5px;height:10px;padding-left:3px;box-sizing:border-box;"><span style="transform:scaleX(0.798);transform-origin:0 50%">1-1-0-000</span></div>
<div class="c" style="left:191px;top:478.43px;width:213px;height:10px;padding-left:4px;box-sizing:border-box;"><span style="transform:scaleX(0.903);transform-origin:0 50%">JR LOS SAUCES #  CDRA: 1 DPTO:  MZ: A LT: 11</span></div>
<div class="c" style="left:404px;top:478.43px;width:94px;height:10px;padding-left:3.3px;box-sizing:border-box;"><span style="transform:scaleX(0.955);transform-origin:0 50%">LA ALAMEDA DEL EDEN</span></div>
<div class="c" style="left:498px;top:478.43px;width:81.5px;height:10px;padding-left:2.7px;box-sizing:border-box;"><span style="transform:scaleX(0.878);transform-origin:0 50%">EA22350201</span></div>
<div class="c" style="left:579.5px;top:478.43px;width:60.799999999999955px;height:10px;padding-left:2.8px;box-sizing:border-box;"><span style="transform:scaleX(0.944);transform-origin:0 50%">CONSUMO LEIDO</span></div>
<div class="c" style="left:641px;top:478.43px;width:84px;height:10px;padding-left:2.5px;box-sizing:border-box;"><span style="transform:scaleX(0.949);transform-origin:0 50%">DOMESTICO</span></div>
<div class="c" style="left:725px;top:478.43px;width:123px;height:10px;padding-left:3px;box-sizing:border-box;"><span style="transform:scaleX(0.949);transform-origin:0 50%">DOMESTICO</span></div>
<div class="c" style="left:16.5px;top:488.78px;width:73.0px;height:10px;text-align:center;"><span style="transform:scaleX(0.820);transform-origin:50% 50%">24</span></div>
<div class="c" style="left:90.5px;top:488.78px;width:40.0px;height:10px;text-align:center;"><span style="transform:scaleX(0.820);transform-origin:50% 50%">24</span></div>
<div class="c" style="left:129.5px;top:488.78px;width:61.5px;height:10px;padding-left:3px;box-sizing:border-box;"><span style="transform:scaleX(0.798);transform-origin:0 50%">1-1-0-000</span></div>
<div class="c" style="left:191px;top:488.78px;width:213px;height:10px;padding-left:4px;box-sizing:border-box;"><span style="transform:scaleX(0.889);transform-origin:0 50%">JIRON LOS SAUCES # 100</span></div>
<div class="c" style="left:404px;top:488.78px;width:94px;height:10px;padding-left:3.3px;box-sizing:border-box;"><span style="transform:scaleX(0.955);transform-origin:0 50%">LA ALAMEDA DEL EDEN</span></div>
<div class="c" style="left:498px;top:488.78px;width:81.5px;height:10px;padding-left:2.7px;box-sizing:border-box;"><span style="transform:scaleX(0.919);transform-origin:0 50%">EA22350206</span></div>
<div class="c" style="left:579.5px;top:488.78px;width:60.799999999999955px;height:10px;padding-left:2.8px;box-sizing:border-box;"><span style="transform:scaleX(0.944);transform-origin:0 50%">CONSUMO LEIDO</span></div>
<div class="c" style="left:641px;top:488.78px;width:84px;height:10px;padding-left:2.5px;box-sizing:border-box;"><span style="transform:scaleX(0.949);transform-origin:0 50%">DOMESTICO</span></div>
<div class="c" style="left:725px;top:488.78px;width:123px;height:10px;padding-left:3px;box-sizing:border-box;"><span style="transform:scaleX(0.949);transform-origin:0 50%">DOMESTICO</span></div>
<div class="c" style="left:16.5px;top:499.14px;width:73.0px;height:10px;text-align:center;"><span style="transform:scaleX(0.820);transform-origin:50% 50%">25</span></div>
<div class="c" style="left:90.5px;top:499.14px;width:40.0px;height:10px;text-align:center;"><span style="transform:scaleX(0.820);transform-origin:50% 50%">25</span></div>
<div class="c" style="left:129.5px;top:499.14px;width:61.5px;height:10px;padding-left:3px;box-sizing:border-box;"><span style="transform:scaleX(0.798);transform-origin:0 50%">1-1-0-000</span></div>
<div class="c" style="left:191px;top:499.14px;width:213px;height:10px;padding-left:4px;box-sizing:border-box;"><span style="transform:scaleX(0.921);transform-origin:0 50%">JR JUAN VELASCO ALVARADO #  CDRA: 1 DPTO:  MZ: 7 LT: 1</span></div>
<div class="c" style="left:404px;top:499.14px;width:94px;height:10px;padding-left:3.3px;box-sizing:border-box;"><span style="transform:scaleX(0.957);transform-origin:0 50%">JUAN VELASCO ALVARADO</span></div>
<div class="c" style="left:498px;top:499.14px;width:81.5px;height:10px;padding-left:2.7px;box-sizing:border-box;"><span style="transform:scaleX(0.919);transform-origin:0 50%">EA22323987</span></div>
<div class="c" style="left:579.5px;top:499.14px;width:60.799999999999955px;height:10px;padding-left:2.8px;box-sizing:border-box;"><span style="transform:scaleX(0.944);transform-origin:0 50%">CONSUMO LEIDO</span></div>
<div class="c" style="left:641px;top:499.14px;width:84px;height:10px;padding-left:2.5px;box-sizing:border-box;"><span style="transform:scaleX(0.949);transform-origin:0 50%">DOMESTICO</span></div>
<div class="c" style="left:725px;top:499.14px;width:123px;height:10px;padding-left:3px;box-sizing:border-box;"><span style="transform:scaleX(0.949);transform-origin:0 50%">DOMESTICO</span></div>
<div class="c" style="left:16.5px;top:509.50px;width:73.0px;height:10px;text-align:center;"><span style="transform:scaleX(0.820);transform-origin:50% 50%">26</span></div>
<div class="c" style="left:90.5px;top:509.50px;width:40.0px;height:10px;text-align:center;"><span style="transform:scaleX(0.820);transform-origin:50% 50%">26</span></div>
<div class="c" style="left:129.5px;top:509.50px;width:61.5px;height:10px;padding-left:3px;box-sizing:border-box;"><span style="transform:scaleX(0.798);transform-origin:0 50%">1-1-0-000</span></div>
<div class="c" style="left:191px;top:509.50px;width:213px;height:10px;padding-left:4px;box-sizing:border-box;"><span style="transform:scaleX(0.925);transform-origin:0 50%">JIRON SAN CARLOS # 200 MZ: 9 LT: 2C</span></div>
<div class="c" style="left:404px;top:509.50px;width:94px;height:10px;padding-left:3.3px;box-sizing:border-box;"><span style="transform:scaleX(0.941);transform-origin:0 50%">AMPLIACION LOS INCA</span></div>
<div class="c" style="left:498px;top:509.50px;width:81.5px;height:10px;padding-left:2.7px;box-sizing:border-box;"><span style="transform:scaleX(0.919);transform-origin:0 50%">EA22349892</span></div>
<div class="c" style="left:579.5px;top:509.50px;width:60.799999999999955px;height:10px;padding-left:2.8px;box-sizing:border-box;"><span style="transform:scaleX(0.944);transform-origin:0 50%">CONSUMO LEIDO</span></div>
<div class="c" style="left:641px;top:509.50px;width:84px;height:10px;padding-left:2.5px;box-sizing:border-box;"><span style="transform:scaleX(0.949);transform-origin:0 50%">DOMESTICO</span></div>
<div class="c" style="left:725px;top:509.50px;width:123px;height:10px;padding-left:3px;box-sizing:border-box;"><span style="transform:scaleX(0.949);transform-origin:0 50%">DOMESTICO</span></div>
<div class="c" style="left:16.5px;top:519.85px;width:73.0px;height:10px;text-align:center;"><span style="transform:scaleX(0.820);transform-origin:50% 50%">27</span></div>
<div class="c" style="left:90.5px;top:519.85px;width:40.0px;height:10px;text-align:center;"><span style="transform:scaleX(0.820);transform-origin:50% 50%">27</span></div>
<div class="c" style="left:129.5px;top:519.85px;width:61.5px;height:10px;padding-left:3px;box-sizing:border-box;"><span style="transform:scaleX(0.798);transform-origin:0 50%">1-1-0-000</span></div>
<div class="c" style="left:191px;top:519.85px;width:213px;height:10px;padding-left:4px;box-sizing:border-box;"><span style="transform:scaleX(0.931);transform-origin:0 50%">JIRON SAN FRANCISCO # 300</span></div>
<div class="c" style="left:404px;top:519.85px;width:94px;height:10px;padding-left:3.3px;box-sizing:border-box;"><span style="transform:scaleX(0.964);transform-origin:0 50%">BARRIO ALTO</span></div>
<div class="c" style="left:498px;top:519.85px;width:81.5px;height:10px;padding-left:2.7px;box-sizing:border-box;"><span style="transform:scaleX(0.919);transform-origin:0 50%">EA22326446</span></div>
<div class="c" style="left:579.5px;top:519.85px;width:60.799999999999955px;height:10px;padding-left:2.8px;box-sizing:border-box;"><span style="transform:scaleX(0.944);transform-origin:0 50%">CONSUMO LEIDO</span></div>
<div class="c" style="left:641px;top:519.85px;width:84px;height:10px;padding-left:2.5px;box-sizing:border-box;"><span style="transform:scaleX(0.949);transform-origin:0 50%">DOMESTICO</span></div>
<div class="c" style="left:725px;top:519.85px;width:123px;height:10px;padding-left:3px;box-sizing:border-box;"><span style="transform:scaleX(0.949);transform-origin:0 50%">DOMESTICO</span></div>
<div class="c" style="left:16.5px;top:530.21px;width:73.0px;height:10px;text-align:center;"><span style="transform:scaleX(0.820);transform-origin:50% 50%">28</span></div>
<div class="c" style="left:90.5px;top:530.21px;width:40.0px;height:10px;text-align:center;"><span style="transform:scaleX(0.820);transform-origin:50% 50%">28</span></div>
<div class="c" style="left:129.5px;top:530.21px;width:61.5px;height:10px;padding-left:3px;box-sizing:border-box;"><span style="transform:scaleX(0.798);transform-origin:0 50%">1-1-0-000</span></div>
<div class="c" style="left:191px;top:530.21px;width:213px;height:10px;padding-left:4px;box-sizing:border-box;"><span style="transform:scaleX(0.936);transform-origin:0 50%">PROLONGACION SAN FRANCISCO # 300</span></div>
<div class="c" style="left:404px;top:530.21px;width:175.5px;height:10px;padding-left:3.3px;box-sizing:border-box;"><span style="transform:scaleX(0.950);transform-origin:0 50%">EL TRIUNFO  - BARRIO ALTO III ETAPA</span></div>
<div class="c" style="left:579.5px;top:530.21px;width:60.799999999999955px;height:10px;padding-left:2.8px;box-sizing:border-box;"><span style="transform:scaleX(0.950);transform-origin:0 50%">CONSUMO ASIGNADO</span></div>
<div class="c" style="left:641px;top:530.21px;width:84px;height:10px;padding-left:2.5px;box-sizing:border-box;"><span style="transform:scaleX(0.949);transform-origin:0 50%">DOMESTICO</span></div>
<div class="c" style="left:725px;top:530.21px;width:123px;height:10px;padding-left:3px;box-sizing:border-box;"><span style="transform:scaleX(0.949);transform-origin:0 50%">DOMESTICO</span></div>
<div class="c" style="left:16.5px;top:540.57px;width:73.0px;height:10px;text-align:center;"><span style="transform:scaleX(0.820);transform-origin:50% 50%">29</span></div>
<div class="c" style="left:90.5px;top:540.57px;width:40.0px;height:10px;text-align:center;"><span style="transform:scaleX(0.820);transform-origin:50% 50%">29</span></div>
<div class="c" style="left:129.5px;top:540.57px;width:61.5px;height:10px;padding-left:3px;box-sizing:border-box;"><span style="transform:scaleX(0.798);transform-origin:0 50%">1-1-0-000</span></div>
<div class="c" style="left:191px;top:540.57px;width:213px;height:10px;padding-left:4px;box-sizing:border-box;"><span style="transform:scaleX(0.931);transform-origin:0 50%">PJE DE LA LUNA #  CDRA: 0 DPTO:  MZ:  LT:</span></div>
<div class="c" style="left:404px;top:540.57px;width:175.5px;height:10px;padding-left:3.3px;box-sizing:border-box;"><span style="transform:scaleX(0.958);transform-origin:0 50%">JUAN VELASCO ALVARADO II ETAPA</span></div>
<div class="c" style="left:579.5px;top:540.57px;width:60.799999999999955px;height:10px;padding-left:2.8px;box-sizing:border-box;"><span style="transform:scaleX(0.950);transform-origin:0 50%">CONSUMO ASIGNADO</span></div>
<div class="c" style="left:641px;top:540.57px;width:84px;height:10px;padding-left:2.5px;box-sizing:border-box;"><span style="transform:scaleX(0.949);transform-origin:0 50%">DOMESTICO</span></div>
<div class="c" style="left:725px;top:540.57px;width:123px;height:10px;padding-left:3px;box-sizing:border-box;"><span style="transform:scaleX(0.949);transform-origin:0 50%">DOMESTICO</span></div>
<div class="c" style="left:16.5px;top:550.92px;width:73.0px;height:10px;text-align:center;"><span style="transform:scaleX(0.820);transform-origin:50% 50%">30</span></div>
<div class="c" style="left:90.5px;top:550.92px;width:40.0px;height:10px;text-align:center;"><span style="transform:scaleX(0.820);transform-origin:50% 50%">30</span></div>
<div class="c" style="left:129.5px;top:550.92px;width:61.5px;height:10px;padding-left:3px;box-sizing:border-box;"><span style="transform:scaleX(0.798);transform-origin:0 50%">1-1-0-000</span></div>
<div class="c" style="left:191px;top:550.92px;width:213px;height:10px;padding-left:4px;box-sizing:border-box;"><span style="transform:scaleX(0.941);transform-origin:0 50%">JR TACNA #  CDRA: 2 DPTO:  MZ: 24B LT: 24</span></div>
<div class="c" style="left:404px;top:550.92px;width:94px;height:10px;padding-left:3.3px;box-sizing:border-box;"><span style="transform:scaleX(0.964);transform-origin:0 50%">BARRIO ALTO</span></div>
<div class="c" style="left:498px;top:550.92px;width:81.5px;height:10px;padding-left:2.7px;box-sizing:border-box;"><span style="transform:scaleX(0.919);transform-origin:0 50%">EA22326790</span></div>
<div class="c" style="left:579.5px;top:550.92px;width:60.799999999999955px;height:10px;padding-left:2.8px;box-sizing:border-box;"><span style="transform:scaleX(0.944);transform-origin:0 50%">CONSUMO LEIDO</span></div>
<div class="c" style="left:641px;top:550.92px;width:84px;height:10px;padding-left:2.5px;box-sizing:border-box;"><span style="transform:scaleX(0.949);transform-origin:0 50%">DOMESTICO</span></div>
<div class="c" style="left:725px;top:550.92px;width:123px;height:10px;padding-left:3px;box-sizing:border-box;"><span style="transform:scaleX(0.949);transform-origin:0 50%">DOMESTICO</span></div>
<div class="c" style="left:16.5px;top:561.28px;width:73.0px;height:10px;text-align:center;"><span style="transform:scaleX(0.820);transform-origin:50% 50%">31</span></div>
<div class="c" style="left:90.5px;top:561.28px;width:40.0px;height:10px;text-align:center;"><span style="transform:scaleX(0.820);transform-origin:50% 50%">31</span></div>
<div class="c" style="left:129.5px;top:561.28px;width:61.5px;height:10px;padding-left:3px;box-sizing:border-box;"><span style="transform:scaleX(0.798);transform-origin:0 50%">1-1-0-000</span></div>
<div class="c" style="left:191px;top:561.28px;width:213px;height:10px;padding-left:4px;box-sizing:border-box;"><span style="transform:scaleX(0.900);transform-origin:0 50%">JR SAN ANTONIO #  CDRA: 1 DPTO:  MZ: 14 LT: 12</span></div>
<div class="c" style="left:404px;top:561.28px;width:94px;height:10px;padding-left:3.3px;box-sizing:border-box;"><span style="transform:scaleX(0.941);transform-origin:0 50%">AMPLIACION LOS INCA</span></div>
<div class="c" style="left:498px;top:561.28px;width:81.5px;height:10px;padding-left:2.7px;box-sizing:border-box;"><span style="transform:scaleX(0.849);transform-origin:0 50%">EA22350115</span></div>
<div class="c" style="left:579.5px;top:561.28px;width:60.799999999999955px;height:10px;padding-left:2.8px;box-sizing:border-box;"><span style="transform:scaleX(0.944);transform-origin:0 50%">CONSUMO LEIDO</span></div>
<div class="c" style="left:641px;top:561.28px;width:84px;height:10px;padding-left:2.5px;box-sizing:border-box;"><span style="transform:scaleX(0.949);transform-origin:0 50%">DOMESTICO</span></div>
<div class="c" style="left:725px;top:561.28px;width:123px;height:10px;padding-left:3px;box-sizing:border-box;"><span style="transform:scaleX(0.949);transform-origin:0 50%">DOMESTICO</span></div>
<div style="left:190.3px;top:188px;width:3px;height:343.1820000000001px;background:#0e0ea8;"></div>
<div style="left:640.2px;top:188px;width:2.7px;height:343.1820000000001px;background:#0e0ea8;"></div>
<div style="left:190.3px;top:528.182px;width:452.6px;height:3px;background:#0e0ea8;"></div>
<div style="left:190.3px;top:188.2px;width:452.6px;height:1.3px;background:#15157c;"></div>
<div style="left:723.7px;top:342.16px;width:125.3px;height:12.96px;border:2px solid #2f7d5b;box-sizing:border-box;box-shadow:inset 0 0 0 0.8px rgba(255,255,255,.6)"></div>
<div style="left:845.2px;top:351.613px;width:4.6px;height:4.6px;background:#2a7a55;border:1px solid #a6a6a6;box-sizing:content-box;"></div>
</div></body></html>
